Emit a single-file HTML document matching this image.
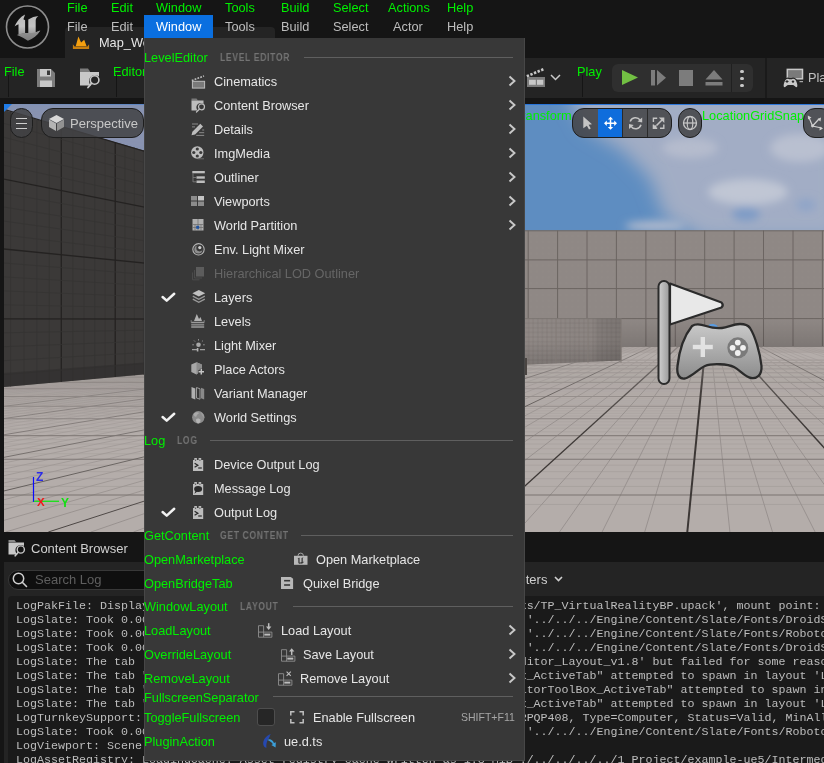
<!DOCTYPE html><html><head><meta charset="utf-8"><style>
html,body{margin:0;padding:0}
body{width:824px;height:763px;overflow:hidden;position:relative;background:#151515;font-family:"Liberation Sans",sans-serif}
.t{position:absolute;white-space:pre;line-height:15px;font-family:"Liberation Sans",sans-serif;will-change:transform}
.m{position:absolute;will-change:transform;white-space:pre;font-family:"Liberation Mono",monospace;font-size:11.667px;line-height:14px;color:#bdbdbd}
svg{overflow:visible}
</style></head><body>
<svg style="position:absolute;left:0px;top:0px;" width="56" height="56" viewBox="0 0 56 56">
<defs><linearGradient id="ug" gradientUnits="userSpaceOnUse" x1="0" y1="14" x2="0" y2="41"><stop offset="0" stop-color="#b8b8b8"/><stop offset="0.45" stop-color="#c4c4c4"/><stop offset="0.75" stop-color="#9a9a9a"/><stop offset="1" stop-color="#7a7a7a"/></linearGradient><linearGradient id="ugb" gradientUnits="userSpaceOnUse" x1="0" y1="30" x2="0" y2="41"><stop offset="0" stop-color="#959595"/><stop offset="1" stop-color="#7c7c7c"/></linearGradient></defs>
<circle cx="27.5" cy="27" r="21" fill="#121212" stroke="#8e8e8e" stroke-width="1.6"/>
<path d="M14.6 26.5 C16.5 21.5 20.5 16.5 25.1 14.4 L23.4 19.2 L25.1 20.3 L25.1 33.3 L18.5 34.5 L18.5 24.2 C17 24.6 15.8 25.5 14.6 26.5 Z" fill="url(#ug)"/><path d="M28.3 19.6 C31.5 17.5 35 16.3 38.4 16 C36.8 17.3 35.7 18.5 35.7 20.5 L35.7 32.3 C37.3 31.8 38.8 31.3 40.3 30.6 L34 37 L28.3 34 Z" fill="url(#ug)"/><path d="M16.9 35 C19.5 34 22 33.3 25.1 33 L28.3 33 C31 33.3 35 33 40.3 30.6 C37.5 35.5 33 39 27.9 40.7 C25.5 39.2 22 37 16.9 35 Z" fill="url(#ugb)"/>
</svg>
<div style="position:absolute;left:65px;top:27px;width:210px;height:31px;background:#242424;border-radius:4px 4px 0 0"></div>
<svg style="position:absolute;left:72px;top:36px;" width="18" height="14" viewBox="0 0 18 14"><path d="M3.7 10.2 L6.4 0.4 L9.1 6.4 L12.2 3.7 L14.6 10.2 Z" fill="#f5a00f"/><path d="M0.9 8.2 L2.6 10.4 H15.4 L17.1 8.2 V13 H0.9 Z" fill="#c9800f"/></svg>
<div class="t" style="left:98.50px;top:34.88px;font-size:12.75px;color:#e6e6e6;font-weight:normal;">Map_World</div>
<div class="t" style="left:67.00px;top:-0.02px;font-size:12.75px;color:#00f000;font-weight:normal;">File</div>
<div class="t" style="left:111.00px;top:-0.02px;font-size:12.75px;color:#00f000;font-weight:normal;">Edit</div>
<div class="t" style="left:155.50px;top:-0.02px;font-size:12.75px;color:#00f000;font-weight:normal;">Window</div>
<div class="t" style="left:224.50px;top:-0.02px;font-size:12.75px;color:#00f000;font-weight:normal;">Tools</div>
<div class="t" style="left:281.00px;top:-0.02px;font-size:12.75px;color:#00f000;font-weight:normal;">Build</div>
<div class="t" style="left:333.00px;top:-0.02px;font-size:12.75px;color:#00f000;font-weight:normal;">Select</div>
<div class="t" style="left:387.50px;top:-0.02px;font-size:12.75px;color:#00f000;font-weight:normal;">Actions</div>
<div class="t" style="left:447.00px;top:-0.02px;font-size:12.75px;color:#00f000;font-weight:normal;">Help</div>
<div style="position:absolute;left:144px;top:15px;width:69px;height:23px;background:#0a6fe0;"></div>
<div class="t" style="left:67.00px;top:19.08px;font-size:12.75px;color:#bdbdbd;font-weight:normal;">File</div>
<div class="t" style="left:111.00px;top:19.08px;font-size:12.75px;color:#bdbdbd;font-weight:normal;">Edit</div>
<div class="t" style="left:155.50px;top:19.08px;font-size:12.75px;color:#ffffff;font-weight:normal;">Window</div>
<div class="t" style="left:224.50px;top:19.08px;font-size:12.75px;color:#bdbdbd;font-weight:normal;">Tools</div>
<div class="t" style="left:281.00px;top:19.08px;font-size:12.75px;color:#bdbdbd;font-weight:normal;">Build</div>
<div class="t" style="left:333.00px;top:19.08px;font-size:12.75px;color:#bdbdbd;font-weight:normal;">Select</div>
<div class="t" style="left:393.00px;top:19.08px;font-size:12.75px;color:#bdbdbd;font-weight:normal;">Actor</div>
<div class="t" style="left:447.00px;top:19.08px;font-size:12.75px;color:#bdbdbd;font-weight:normal;">Help</div>
<div style="position:absolute;left:0px;top:58px;width:824px;height:40px;background:#242424;"></div>
<div class="t" style="left:4.00px;top:63.88px;font-size:12.75px;color:#00f000;font-weight:normal;">File</div>
<div style="position:absolute;left:8px;top:75px;width:1px;height:22px;background:#151515;"></div>
<svg style="position:absolute;left:36px;top:68px;" width="20" height="20" viewBox="0 0 20 20"><path d="M1 1 H15 L19 5 V19 H1 Z" fill="#7c7c7c"/><rect x="4" y="1" width="11" height="7.5" fill="#c8c8c8"/><rect x="11" y="2.5" width="3" height="4.5" fill="#3a3a3a"/><rect x="4" y="12.5" width="12" height="6.5" fill="#c8c8c8"/></svg>
<svg style="position:absolute;left:80px;top:68px;" width="22" height="22" viewBox="0 0 22 22"><path d="M0 0.5 H8 L10 3.5 H10 V4 H0 Z" fill="#7c7c7c"/><path d="M0 4 H19 V8.5 A6 6 0 0 0 11 17.5 H0 Z" fill="#c8c8c8"/><circle cx="14.6" cy="12" r="4.3" fill="none" stroke="#c8c8c8" stroke-width="1.6"/><path d="M11.6 15.2 L8 19.5" stroke="#c8c8c8" stroke-width="1.8" stroke-linecap="round"/></svg>
<div class="t" style="left:112.50px;top:63.88px;font-size:12.75px;color:#00f000;font-weight:normal;">Editor</div>
<div style="position:absolute;left:116px;top:75px;width:1px;height:22px;background:#151515;"></div>
<svg style="position:absolute;left:0px;top:0px;" width="1" height="1" viewBox="0 0 1 1"><path d="M526.8 76.3 L544 69" stroke="#c8c8c8" stroke-width="2.6" stroke-dasharray="2.4 1.5"/><rect x="527" y="77" width="18" height="10" fill="#7c7c7c"/><rect x="529" y="79.8" width="6.8" height="5" fill="#c8c8c8"/><rect x="537" y="79.8" width="6.3" height="5" fill="#c8c8c8"/></svg>
<svg style="position:absolute;left:550px;top:74px;" width="11" height="7" viewBox="0 0 11 7"><path d="M1 1 L5.5 5.5 L10 1" fill="none" stroke="#c8c8c8" stroke-width="1.5"/></svg>
<div class="t" style="left:577.00px;top:64.38px;font-size:12.75px;color:#00f000;font-weight:normal;">Play</div>
<div style="position:absolute;left:582px;top:75px;width:1px;height:22px;background:#151515;"></div>
<div style="position:absolute;left:612px;top:64px;width:141px;height:28px;background:#2f2f2f;border-radius:6px"></div>
<div style="position:absolute;left:731px;top:64px;width:1px;height:28px;background:#202020;"></div>
<svg style="position:absolute;left:621px;top:69px;" width="18" height="18" viewBox="0 0 18 18"><path d="M1 1 L17 8.5 L1 16 Z" fill="#72c043"/></svg>
<svg style="position:absolute;left:650px;top:69px;" width="18" height="18" viewBox="0 0 18 18"><rect x="1" y="1" width="4" height="15.5" fill="#7c7c7c"/><path d="M7 1 L16 8.7 L7 16.5 Z" fill="#7c7c7c"/></svg>
<div style="position:absolute;left:679px;top:70px;width:14px;height:15.5px;background:#7c7c7c;"></div>
<svg style="position:absolute;left:705px;top:69px;" width="20" height="18" viewBox="0 0 20 18"><path d="M0.5 10.5 L9 1 L17.5 10.5 Z" fill="#7c7c7c"/><rect x="0.5" y="13" width="17" height="3.5" fill="#7c7c7c"/></svg>
<div style="position:absolute;left:740px;top:69.5px;width:3.6px;height:3.6px;border-radius:50%;background:#c8c8c8"></div>
<div style="position:absolute;left:740px;top:76.7px;width:3.6px;height:3.6px;border-radius:50%;background:#c8c8c8"></div>
<div style="position:absolute;left:740px;top:83.8px;width:3.6px;height:3.6px;border-radius:50%;background:#c8c8c8"></div>
<div style="position:absolute;left:765px;top:58px;width:2px;height:40px;background:#1a1a1a;"></div>
<svg style="position:absolute;left:782px;top:68px;" width="22" height="22" viewBox="0 0 22 22"><rect x="5.3" y="1.4" width="15.2" height="9.4" fill="#7a7a7a" stroke="#c8c8c8" stroke-width="1.5"/><path d="M2.5 19.8 C0.6 19.8 0.6 16.5 2.2 13 C3.2 10.8 5.5 9.5 7.2 10.6 L9.8 10.6 C11.5 9.5 13.8 10.8 14.8 13 C16.4 16.5 16.4 19.8 14.5 19.8 C13 19.8 12 17.5 10.5 17.5 L6.5 17.5 C5 17.5 4 19.8 2.5 19.8 Z" fill="#c8c8c8" stroke="#242424" stroke-width="1.2"/><path d="M3.5 13.5 H6.5 M5 12 V15" stroke="#2a2a2a" stroke-width="1"/><circle cx="11" cy="13.6" r="1.2" fill="#2a2a2a"/><path d="M17.5 13.7 H21" stroke="#c8c8c8" stroke-width="1"/></svg>
<div class="t" style="left:808.00px;top:70.28px;font-size:12.75px;color:#c0c0c0;font-weight:normal;">Play</div>
<svg style="position:absolute;left:0;top:0" width="824" height="532" viewBox="0 0 824 532"><defs>
<clipPath id="vpc"><rect x="4" y="104" width="820" height="428"/></clipPath>
<clipPath id="floorc"><rect x="4" y="347" width="820" height="186"/></clipPath>
<linearGradient id="sky" x1="0" y1="0" x2="0" y2="1"><stop offset="0" stop-color="#5a84b9"/><stop offset="1" stop-color="#7b9cc6"/></linearGradient>
<filter id="blur8" x="-50%" y="-50%" width="200%" height="200%"><feGaussianBlur stdDeviation="9"/></filter>
<filter id="blur4" x="-50%" y="-50%" width="200%" height="200%"><feGaussianBlur stdDeviation="4"/></filter>
<pattern id="fgrid" x="0" y="0" width="5.9" height="5.9" patternUnits="userSpaceOnUse"><rect width="5.9" height="5.9" fill="none" stroke="#938b88" stroke-width="0.35"/></pattern>
<pattern id="lgrid" x="524" y="318.6" width="4.6" height="4.6" patternUnits="userSpaceOnUse"><rect width="4.6" height="4.6" fill="none" stroke="#7c7572" stroke-width="0.45"/></pattern>
<pattern id="dgrid" x="4" y="0" width="6" height="6" patternUnits="userSpaceOnUse"><rect width="6" height="6" fill="none" stroke="#2f2d2c" stroke-width="0.5"/></pattern>
<linearGradient id="padg" x1="0" y1="0" x2="0" y2="1"><stop offset="0" stop-color="#c9c9c9"/><stop offset="1" stop-color="#8c8c8c"/></linearGradient>
<linearGradient id="poleg" x1="0" y1="0" x2="1" y2="0"><stop offset="0" stop-color="#d0d0d0"/><stop offset="1" stop-color="#9a9a9a"/></linearGradient>
</defs><g clip-path="url(#vpc)"><rect x="4" y="104" width="820" height="250" fill="#5e8dc1"/><g filter="url(#blur8)"><path d="M565 90 L840 90 L840 240 L705 240 L665 218 L650 178 L622 150 L585 128 Z" fill="#a2adc5"/><path d="M-20 95 L420 95 L420 200 L-20 140 Z" fill="#8993b0"/></g><g filter="url(#blur4)"><ellipse cx="748" cy="192" rx="40" ry="13" fill="#c0c6d4"/><ellipse cx="800" cy="148" rx="30" ry="14" fill="#b9c0d0"/><ellipse cx="690" cy="148" rx="28" ry="10" fill="#b5bccd"/><ellipse cx="655" cy="226" rx="30" ry="5" fill="#b3bbcd"/><ellipse cx="746" cy="214" rx="14" ry="7" fill="#7e9bc6"/><ellipse cx="806" cy="205" rx="10" ry="6" fill="#8ea4c8"/></g><rect x="4" y="230.5" width="820" height="117" fill="#8f8885"/><rect x="4" y="230.5" width="820" height="116" fill="url(#fgrid)" opacity="0.5"/><line x1="-1.4" y1="230.5" x2="-1.4" y2="346" stroke="#6c6562" stroke-width="1"/><line x1="28.0" y1="230.5" x2="28.0" y2="346" stroke="#6c6562" stroke-width="1"/><line x1="57.5" y1="230.5" x2="57.5" y2="346" stroke="#6c6562" stroke-width="1"/><line x1="86.9" y1="230.5" x2="86.9" y2="346" stroke="#6c6562" stroke-width="1"/><line x1="116.3" y1="230.5" x2="116.3" y2="346" stroke="#6c6562" stroke-width="1"/><line x1="145.7" y1="230.5" x2="145.7" y2="346" stroke="#6c6562" stroke-width="1"/><line x1="175.1" y1="230.5" x2="175.1" y2="346" stroke="#6c6562" stroke-width="1"/><line x1="204.6" y1="230.5" x2="204.6" y2="346" stroke="#6c6562" stroke-width="1"/><line x1="234.0" y1="230.5" x2="234.0" y2="346" stroke="#6c6562" stroke-width="1"/><line x1="263.4" y1="230.5" x2="263.4" y2="346" stroke="#6c6562" stroke-width="1"/><line x1="292.8" y1="230.5" x2="292.8" y2="346" stroke="#6c6562" stroke-width="1"/><line x1="322.2" y1="230.5" x2="322.2" y2="346" stroke="#6c6562" stroke-width="1"/><line x1="351.7" y1="230.5" x2="351.7" y2="346" stroke="#6c6562" stroke-width="1"/><line x1="381.1" y1="230.5" x2="381.1" y2="346" stroke="#6c6562" stroke-width="1"/><line x1="410.5" y1="230.5" x2="410.5" y2="346" stroke="#6c6562" stroke-width="1"/><line x1="439.9" y1="230.5" x2="439.9" y2="346" stroke="#6c6562" stroke-width="1"/><line x1="469.3" y1="230.5" x2="469.3" y2="346" stroke="#6c6562" stroke-width="1"/><line x1="498.8" y1="230.5" x2="498.8" y2="346" stroke="#6c6562" stroke-width="1"/><line x1="528.2" y1="230.5" x2="528.2" y2="346" stroke="#6c6562" stroke-width="1"/><line x1="557.6" y1="230.5" x2="557.6" y2="346" stroke="#6c6562" stroke-width="1"/><line x1="587.0" y1="230.5" x2="587.0" y2="346" stroke="#6c6562" stroke-width="1"/><line x1="616.4" y1="230.5" x2="616.4" y2="346" stroke="#6c6562" stroke-width="1"/><line x1="645.9" y1="230.5" x2="645.9" y2="346" stroke="#6c6562" stroke-width="1"/><line x1="675.3" y1="230.5" x2="675.3" y2="346" stroke="#6c6562" stroke-width="1"/><line x1="704.7" y1="230.5" x2="704.7" y2="346" stroke="#6c6562" stroke-width="1"/><line x1="734.1" y1="230.5" x2="734.1" y2="346" stroke="#6c6562" stroke-width="1"/><line x1="763.5" y1="230.5" x2="763.5" y2="346" stroke="#6c6562" stroke-width="1"/><line x1="793.0" y1="230.5" x2="793.0" y2="346" stroke="#6c6562" stroke-width="1"/><line x1="822.4" y1="230.5" x2="822.4" y2="346" stroke="#6c6562" stroke-width="1"/><line x1="4" y1="230.8" x2="824" y2="230.8" stroke="#6c6562" stroke-width="1"/><line x1="4" y1="259.9" x2="824" y2="259.9" stroke="#6c6562" stroke-width="1"/><line x1="4" y1="288.6" x2="824" y2="288.6" stroke="#6c6562" stroke-width="1"/><line x1="4" y1="318.6" x2="824" y2="318.6" stroke="#6c6562" stroke-width="1"/><linearGradient id="wao" x1="0" y1="0" x2="0" y2="1"><stop offset="0" stop-color="#000" stop-opacity="0"/><stop offset="1" stop-color="#000" stop-opacity="0.13"/></linearGradient><rect x="4" y="318" width="820" height="29" fill="url(#wao)"/><linearGradient id="majg" gradientUnits="userSpaceOnUse" x1="0" y1="350" x2="0" y2="532"><stop offset="0" stop-color="#a39c99"/><stop offset="0.275" stop-color="#8e8784"/><stop offset="0.495" stop-color="#736d6a"/><stop offset="1" stop-color="#474240"/></linearGradient><linearGradient id="medg" gradientUnits="userSpaceOnUse" x1="0" y1="350" x2="0" y2="532"><stop offset="0" stop-color="#b2aba8"/><stop offset="0.3" stop-color="#a7a09d"/><stop offset="1" stop-color="#98918e"/></linearGradient><g clip-path="url(#floorc)"><rect x="4" y="345" width="820" height="190" fill="#b4adaa"/><line x1="4" y1="504.48" x2="824" y2="504.48" stroke="#a39c99" stroke-width="0.7"/><line x1="4" y1="486.46" x2="824" y2="486.46" stroke="#a49d9a" stroke-width="0.7"/><line x1="4" y1="478.71" x2="824" y2="478.71" stroke="#a59e9b" stroke-width="0.7"/><line x1="4" y1="471.65" x2="824" y2="471.65" stroke="#a59e9b" stroke-width="0.7"/><line x1="4" y1="465.18" x2="824" y2="465.18" stroke="#a69f9c" stroke-width="0.7"/><line x1="4" y1="453.77" x2="824" y2="453.77" stroke="#a7a09d" stroke-width="0.7"/><line x1="4" y1="448.72" x2="824" y2="448.72" stroke="#a8a19e" stroke-width="0.7"/><line x1="4" y1="444.02" x2="824" y2="444.02" stroke="#a8a19e" stroke-width="0.7"/><line x1="4" y1="439.66" x2="824" y2="439.66" stroke="#a8a19e" stroke-width="0.7"/><line x1="4" y1="431.80" x2="824" y2="431.80" stroke="#a9a29f" stroke-width="0.7"/><line x1="4" y1="428.24" x2="824" y2="428.24" stroke="#a9a29f" stroke-width="0.7"/><line x1="4" y1="424.90" x2="824" y2="424.90" stroke="#aaa3a0" stroke-width="0.7"/><line x1="4" y1="421.76" x2="824" y2="421.76" stroke="#aaa3a0" stroke-width="0.7"/><line x1="4" y1="416.00" x2="824" y2="416.00" stroke="#aba4a1" stroke-width="0.7"/><line x1="4" y1="413.36" x2="824" y2="413.36" stroke="#aba4a1" stroke-width="0.7"/><line x1="4" y1="410.87" x2="824" y2="410.87" stroke="#aba4a1" stroke-width="0.7"/><line x1="4" y1="408.50" x2="824" y2="408.50" stroke="#aba4a1" stroke-width="0.7"/><line x1="4" y1="404.11" x2="824" y2="404.11" stroke="#aca5a2" stroke-width="0.7"/><line x1="4" y1="402.07" x2="824" y2="402.07" stroke="#aca5a2" stroke-width="0.7"/><line x1="4" y1="400.13" x2="824" y2="400.13" stroke="#aca5a2" stroke-width="0.7"/><line x1="4" y1="398.28" x2="824" y2="398.28" stroke="#aca5a2" stroke-width="0.7"/><line x1="4" y1="394.83" x2="824" y2="394.83" stroke="#ada6a3" stroke-width="0.7"/><line x1="4" y1="393.21" x2="824" y2="393.21" stroke="#ada6a3" stroke-width="0.7"/><line x1="4" y1="391.66" x2="824" y2="391.66" stroke="#ada6a3" stroke-width="0.7"/><line x1="4" y1="390.18" x2="824" y2="390.18" stroke="#ada6a3" stroke-width="0.7"/><line x1="4" y1="387.38" x2="824" y2="387.38" stroke="#ada6a3" stroke-width="0.7"/><line x1="4" y1="386.07" x2="824" y2="386.07" stroke="#ada6a3" stroke-width="0.7"/><line x1="4" y1="384.80" x2="824" y2="384.80" stroke="#ada6a3" stroke-width="0.7"/><line x1="4" y1="383.58" x2="824" y2="383.58" stroke="#aea7a4" stroke-width="0.7"/><line x1="4" y1="381.28" x2="824" y2="381.28" stroke="#aea7a4" stroke-width="0.7"/><line x1="4" y1="380.19" x2="824" y2="380.19" stroke="#aea7a4" stroke-width="0.7"/><line x1="4" y1="379.13" x2="824" y2="379.13" stroke="#aea7a4" stroke-width="0.7"/><line x1="4" y1="378.12" x2="824" y2="378.12" stroke="#aea7a4" stroke-width="0.7"/><line x1="4" y1="376.18" x2="824" y2="376.18" stroke="#aea7a4" stroke-width="0.7"/><line x1="4" y1="375.26" x2="824" y2="375.26" stroke="#aea7a4" stroke-width="0.7"/><line x1="4" y1="374.37" x2="824" y2="374.37" stroke="#aea7a4" stroke-width="0.7"/><line x1="4" y1="373.51" x2="824" y2="373.51" stroke="#afa8a5" stroke-width="0.7"/><line x1="4" y1="371.87" x2="824" y2="371.87" stroke="#afa8a5" stroke-width="0.7"/><line x1="4" y1="371.08" x2="824" y2="371.08" stroke="#afa8a5" stroke-width="0.7"/><line x1="4" y1="370.32" x2="824" y2="370.32" stroke="#afa8a5" stroke-width="0.7"/><line x1="4" y1="369.58" x2="824" y2="369.58" stroke="#afa8a5" stroke-width="0.7"/><line x1="4" y1="368.16" x2="824" y2="368.16" stroke="#afa8a5" stroke-width="0.7"/><line x1="4" y1="367.48" x2="824" y2="367.48" stroke="#afa8a5" stroke-width="0.7"/><line x1="4" y1="366.82" x2="824" y2="366.82" stroke="#afa8a5" stroke-width="0.7"/><line x1="4" y1="366.18" x2="824" y2="366.18" stroke="#afa8a5" stroke-width="0.7"/><line x1="4" y1="364.95" x2="824" y2="364.95" stroke="#afa8a5" stroke-width="0.7"/><line x1="4" y1="364.35" x2="824" y2="364.35" stroke="#afa8a5" stroke-width="0.7"/><line x1="4" y1="363.78" x2="824" y2="363.78" stroke="#afa8a5" stroke-width="0.7"/><line x1="4" y1="363.21" x2="824" y2="363.21" stroke="#afa8a5" stroke-width="0.7"/><linearGradient id="lg1" gradientUnits="userSpaceOnUse" x1="0" y1="347" x2="0" y2="532"><stop offset="0.000" stop-color="#b0a9a6"/><stop offset="0.070" stop-color="#afa8a5"/><stop offset="0.178" stop-color="#ada6a3"/><stop offset="0.286" stop-color="#aca5a2"/><stop offset="0.449" stop-color="#aaa3a0"/><stop offset="0.611" stop-color="#a8a29f"/><stop offset="0.827" stop-color="#a7a09d"/><stop offset="1.000" stop-color="#a59e9c"/></linearGradient><line x1="708" y1="319.6" x2="-1826.1" y2="532" stroke="url(#lg1)" stroke-width="0.9"/><linearGradient id="lg2" gradientUnits="userSpaceOnUse" x1="0" y1="347" x2="0" y2="532"><stop offset="0.000" stop-color="#b0a9a6"/><stop offset="0.070" stop-color="#aea8a5"/><stop offset="0.178" stop-color="#ada6a3"/><stop offset="0.286" stop-color="#aca5a2"/><stop offset="0.449" stop-color="#aaa3a0"/><stop offset="0.611" stop-color="#a8a29f"/><stop offset="0.827" stop-color="#a6a09d"/><stop offset="1.000" stop-color="#a59e9b"/></linearGradient><line x1="708" y1="319.6" x2="-1783.5" y2="532" stroke="url(#lg2)" stroke-width="0.9"/><linearGradient id="lg3" gradientUnits="userSpaceOnUse" x1="0" y1="347" x2="0" y2="532"><stop offset="0.000" stop-color="#b0a9a6"/><stop offset="0.070" stop-color="#aea8a5"/><stop offset="0.178" stop-color="#ada6a3"/><stop offset="0.286" stop-color="#aca5a2"/><stop offset="0.449" stop-color="#aaa3a0"/><stop offset="0.611" stop-color="#a8a19f"/><stop offset="0.827" stop-color="#a6a09d"/><stop offset="1.000" stop-color="#a59e9b"/></linearGradient><line x1="708" y1="319.6" x2="-1740.9" y2="532" stroke="url(#lg3)" stroke-width="0.9"/><linearGradient id="lg4" gradientUnits="userSpaceOnUse" x1="0" y1="347" x2="0" y2="532"><stop offset="0.000" stop-color="#b0a9a6"/><stop offset="0.070" stop-color="#aea7a5"/><stop offset="0.178" stop-color="#ada6a3"/><stop offset="0.286" stop-color="#aba5a2"/><stop offset="0.449" stop-color="#aaa3a0"/><stop offset="0.611" stop-color="#a8a19e"/><stop offset="0.827" stop-color="#a69f9d"/><stop offset="1.000" stop-color="#a59e9b"/></linearGradient><line x1="708" y1="319.6" x2="-1698.3" y2="532" stroke="url(#lg4)" stroke-width="0.9"/><linearGradient id="lg5" gradientUnits="userSpaceOnUse" x1="0" y1="347" x2="0" y2="532"><stop offset="0.000" stop-color="#afa9a6"/><stop offset="0.070" stop-color="#aea7a4"/><stop offset="0.178" stop-color="#ada6a3"/><stop offset="0.286" stop-color="#aba4a2"/><stop offset="0.449" stop-color="#a9a3a0"/><stop offset="0.611" stop-color="#a8a19e"/><stop offset="0.827" stop-color="#a69f9c"/><stop offset="1.000" stop-color="#a49e9b"/></linearGradient><line x1="708" y1="319.6" x2="-1613.1" y2="532" stroke="url(#lg5)" stroke-width="0.9"/><linearGradient id="lg6" gradientUnits="userSpaceOnUse" x1="0" y1="347" x2="0" y2="532"><stop offset="0.000" stop-color="#afa8a6"/><stop offset="0.070" stop-color="#aea7a4"/><stop offset="0.178" stop-color="#ada6a3"/><stop offset="0.286" stop-color="#aba4a1"/><stop offset="0.449" stop-color="#a9a3a0"/><stop offset="0.611" stop-color="#a8a19e"/><stop offset="0.827" stop-color="#a69f9c"/><stop offset="1.000" stop-color="#a49e9b"/></linearGradient><line x1="708" y1="319.6" x2="-1570.5" y2="532" stroke="url(#lg6)" stroke-width="0.9"/><linearGradient id="lg7" gradientUnits="userSpaceOnUse" x1="0" y1="347" x2="0" y2="532"><stop offset="0.000" stop-color="#afa8a5"/><stop offset="0.070" stop-color="#aea7a4"/><stop offset="0.178" stop-color="#ada6a3"/><stop offset="0.286" stop-color="#aba4a1"/><stop offset="0.449" stop-color="#a9a2a0"/><stop offset="0.611" stop-color="#a8a19e"/><stop offset="0.827" stop-color="#a69f9c"/><stop offset="1.000" stop-color="#a49d9a"/></linearGradient><line x1="708" y1="319.6" x2="-1527.9" y2="532" stroke="url(#lg7)" stroke-width="0.9"/><linearGradient id="lg8" gradientUnits="userSpaceOnUse" x1="0" y1="347" x2="0" y2="532"><stop offset="0.000" stop-color="#afa8a5"/><stop offset="0.070" stop-color="#aea7a4"/><stop offset="0.178" stop-color="#aca6a3"/><stop offset="0.286" stop-color="#aba4a1"/><stop offset="0.449" stop-color="#a9a29f"/><stop offset="0.611" stop-color="#a7a19e"/><stop offset="0.827" stop-color="#a59f9c"/><stop offset="1.000" stop-color="#a49d9a"/></linearGradient><line x1="708" y1="319.6" x2="-1485.3" y2="532" stroke="url(#lg8)" stroke-width="0.9"/><linearGradient id="lg9" gradientUnits="userSpaceOnUse" x1="0" y1="347" x2="0" y2="532"><stop offset="0.000" stop-color="#afa8a5"/><stop offset="0.070" stop-color="#aea7a4"/><stop offset="0.178" stop-color="#aca5a2"/><stop offset="0.286" stop-color="#aba4a1"/><stop offset="0.449" stop-color="#a9a29f"/><stop offset="0.611" stop-color="#a7a09d"/><stop offset="0.827" stop-color="#a59e9b"/><stop offset="1.000" stop-color="#a49d9a"/></linearGradient><line x1="708" y1="319.6" x2="-1400.1" y2="532" stroke="url(#lg9)" stroke-width="0.9"/><linearGradient id="lg10" gradientUnits="userSpaceOnUse" x1="0" y1="347" x2="0" y2="532"><stop offset="0.000" stop-color="#afa8a5"/><stop offset="0.070" stop-color="#aea7a4"/><stop offset="0.178" stop-color="#aca5a2"/><stop offset="0.286" stop-color="#aba4a1"/><stop offset="0.449" stop-color="#a9a29f"/><stop offset="0.611" stop-color="#a7a09d"/><stop offset="0.827" stop-color="#a59e9b"/><stop offset="1.000" stop-color="#a39d9a"/></linearGradient><line x1="708" y1="319.6" x2="-1357.5" y2="532" stroke="url(#lg10)" stroke-width="0.9"/><linearGradient id="lg11" gradientUnits="userSpaceOnUse" x1="0" y1="347" x2="0" y2="532"><stop offset="0.000" stop-color="#afa8a5"/><stop offset="0.070" stop-color="#aea7a4"/><stop offset="0.178" stop-color="#aca5a2"/><stop offset="0.286" stop-color="#aba4a1"/><stop offset="0.449" stop-color="#a9a29f"/><stop offset="0.611" stop-color="#a7a09d"/><stop offset="0.827" stop-color="#a59e9b"/><stop offset="1.000" stop-color="#a39c9a"/></linearGradient><line x1="708" y1="319.6" x2="-1314.9" y2="532" stroke="url(#lg11)" stroke-width="0.9"/><linearGradient id="lg12" gradientUnits="userSpaceOnUse" x1="0" y1="347" x2="0" y2="532"><stop offset="0.000" stop-color="#afa8a5"/><stop offset="0.070" stop-color="#aea7a4"/><stop offset="0.178" stop-color="#aca5a2"/><stop offset="0.286" stop-color="#aaa4a1"/><stop offset="0.449" stop-color="#a8a29f"/><stop offset="0.611" stop-color="#a7a09d"/><stop offset="0.827" stop-color="#a59e9b"/><stop offset="1.000" stop-color="#a39c99"/></linearGradient><line x1="708" y1="319.6" x2="-1272.3" y2="532" stroke="url(#lg12)" stroke-width="0.9"/><linearGradient id="lg13" gradientUnits="userSpaceOnUse" x1="0" y1="347" x2="0" y2="532"><stop offset="0.000" stop-color="#afa8a5"/><stop offset="0.070" stop-color="#aea7a4"/><stop offset="0.178" stop-color="#aca5a2"/><stop offset="0.286" stop-color="#aaa3a0"/><stop offset="0.449" stop-color="#a8a19e"/><stop offset="0.611" stop-color="#a6a09d"/><stop offset="0.827" stop-color="#a49d9a"/><stop offset="1.000" stop-color="#a29c99"/></linearGradient><line x1="708" y1="319.6" x2="-1187.1" y2="532" stroke="url(#lg13)" stroke-width="0.9"/><linearGradient id="lg14" gradientUnits="userSpaceOnUse" x1="0" y1="347" x2="0" y2="532"><stop offset="0.000" stop-color="#afa8a5"/><stop offset="0.070" stop-color="#ada7a4"/><stop offset="0.178" stop-color="#aca5a2"/><stop offset="0.286" stop-color="#aaa3a0"/><stop offset="0.449" stop-color="#a8a19e"/><stop offset="0.611" stop-color="#a69f9c"/><stop offset="0.827" stop-color="#a49d9a"/><stop offset="1.000" stop-color="#a29c99"/></linearGradient><line x1="708" y1="319.6" x2="-1144.5" y2="532" stroke="url(#lg14)" stroke-width="0.9"/><linearGradient id="lg15" gradientUnits="userSpaceOnUse" x1="0" y1="347" x2="0" y2="532"><stop offset="0.000" stop-color="#afa8a5"/><stop offset="0.070" stop-color="#ada6a4"/><stop offset="0.178" stop-color="#aca5a2"/><stop offset="0.286" stop-color="#aaa3a0"/><stop offset="0.449" stop-color="#a8a19e"/><stop offset="0.611" stop-color="#a69f9c"/><stop offset="0.827" stop-color="#a49d9a"/><stop offset="1.000" stop-color="#a29b98"/></linearGradient><line x1="708" y1="319.6" x2="-1101.9" y2="532" stroke="url(#lg15)" stroke-width="0.9"/><linearGradient id="lg16" gradientUnits="userSpaceOnUse" x1="0" y1="347" x2="0" y2="532"><stop offset="0.000" stop-color="#afa8a5"/><stop offset="0.070" stop-color="#ada6a3"/><stop offset="0.178" stop-color="#aba5a2"/><stop offset="0.286" stop-color="#aaa3a0"/><stop offset="0.449" stop-color="#a8a19e"/><stop offset="0.611" stop-color="#a69f9c"/><stop offset="0.827" stop-color="#a39d9a"/><stop offset="1.000" stop-color="#a29b98"/></linearGradient><line x1="708" y1="319.6" x2="-1059.3" y2="532" stroke="url(#lg16)" stroke-width="0.9"/><linearGradient id="lg17" gradientUnits="userSpaceOnUse" x1="0" y1="347" x2="0" y2="532"><stop offset="0.000" stop-color="#aea8a5"/><stop offset="0.070" stop-color="#ada6a3"/><stop offset="0.178" stop-color="#aba4a1"/><stop offset="0.286" stop-color="#a9a3a0"/><stop offset="0.449" stop-color="#a7a09e"/><stop offset="0.611" stop-color="#a59f9c"/><stop offset="0.827" stop-color="#a39c99"/><stop offset="1.000" stop-color="#a19a98"/></linearGradient><line x1="708" y1="319.6" x2="-974.1" y2="532" stroke="url(#lg17)" stroke-width="0.9"/><linearGradient id="lg18" gradientUnits="userSpaceOnUse" x1="0" y1="347" x2="0" y2="532"><stop offset="0.000" stop-color="#aea7a5"/><stop offset="0.070" stop-color="#ada6a3"/><stop offset="0.178" stop-color="#aba4a1"/><stop offset="0.286" stop-color="#a9a3a0"/><stop offset="0.449" stop-color="#a7a09d"/><stop offset="0.611" stop-color="#a59e9b"/><stop offset="0.827" stop-color="#a39c99"/><stop offset="1.000" stop-color="#a19a97"/></linearGradient><line x1="708" y1="319.6" x2="-931.5" y2="532" stroke="url(#lg18)" stroke-width="0.9"/><linearGradient id="lg19" gradientUnits="userSpaceOnUse" x1="0" y1="347" x2="0" y2="532"><stop offset="0.000" stop-color="#aea7a4"/><stop offset="0.070" stop-color="#ada6a3"/><stop offset="0.178" stop-color="#aba4a1"/><stop offset="0.286" stop-color="#a9a29f"/><stop offset="0.449" stop-color="#a7a09d"/><stop offset="0.611" stop-color="#a59e9b"/><stop offset="0.827" stop-color="#a29c99"/><stop offset="1.000" stop-color="#a19a97"/></linearGradient><line x1="708" y1="319.6" x2="-888.9" y2="532" stroke="url(#lg19)" stroke-width="0.9"/><linearGradient id="lg20" gradientUnits="userSpaceOnUse" x1="0" y1="347" x2="0" y2="532"><stop offset="0.000" stop-color="#aea7a4"/><stop offset="0.070" stop-color="#ada6a3"/><stop offset="0.178" stop-color="#aba4a1"/><stop offset="0.286" stop-color="#a9a29f"/><stop offset="0.449" stop-color="#a7a09d"/><stop offset="0.611" stop-color="#a59e9b"/><stop offset="0.827" stop-color="#a29b99"/><stop offset="1.000" stop-color="#a09a97"/></linearGradient><line x1="708" y1="319.6" x2="-846.3" y2="532" stroke="url(#lg20)" stroke-width="0.9"/><linearGradient id="lg21" gradientUnits="userSpaceOnUse" x1="0" y1="347" x2="0" y2="532"><stop offset="0.000" stop-color="#aea7a4"/><stop offset="0.070" stop-color="#aca6a3"/><stop offset="0.178" stop-color="#aaa4a1"/><stop offset="0.286" stop-color="#a9a29f"/><stop offset="0.449" stop-color="#a69f9d"/><stop offset="0.611" stop-color="#a49d9a"/><stop offset="0.827" stop-color="#a29b98"/><stop offset="1.000" stop-color="#a09996"/></linearGradient><line x1="708" y1="319.6" x2="-761.1" y2="532" stroke="url(#lg21)" stroke-width="0.9"/><linearGradient id="lg22" gradientUnits="userSpaceOnUse" x1="0" y1="347" x2="0" y2="532"><stop offset="0.000" stop-color="#aea7a4"/><stop offset="0.070" stop-color="#aca5a3"/><stop offset="0.178" stop-color="#aaa3a0"/><stop offset="0.286" stop-color="#a8a29f"/><stop offset="0.449" stop-color="#a69f9c"/><stop offset="0.611" stop-color="#a49d9a"/><stop offset="0.827" stop-color="#a19b98"/><stop offset="1.000" stop-color="#9f9996"/></linearGradient><line x1="708" y1="319.6" x2="-718.5" y2="532" stroke="url(#lg22)" stroke-width="0.9"/><linearGradient id="lg23" gradientUnits="userSpaceOnUse" x1="0" y1="347" x2="0" y2="532"><stop offset="0.000" stop-color="#aea7a4"/><stop offset="0.070" stop-color="#aca5a2"/><stop offset="0.178" stop-color="#aaa3a0"/><stop offset="0.286" stop-color="#a8a19f"/><stop offset="0.449" stop-color="#a69f9c"/><stop offset="0.611" stop-color="#a49d9a"/><stop offset="0.827" stop-color="#a19a97"/><stop offset="1.000" stop-color="#9f9895"/></linearGradient><line x1="708" y1="319.6" x2="-675.9" y2="532" stroke="url(#lg23)" stroke-width="0.9"/><linearGradient id="lg24" gradientUnits="userSpaceOnUse" x1="0" y1="347" x2="0" y2="532"><stop offset="0.000" stop-color="#aea7a4"/><stop offset="0.070" stop-color="#aca5a2"/><stop offset="0.178" stop-color="#aaa3a0"/><stop offset="0.286" stop-color="#a8a19e"/><stop offset="0.449" stop-color="#a59f9c"/><stop offset="0.611" stop-color="#a39d9a"/><stop offset="0.827" stop-color="#a09a97"/><stop offset="1.000" stop-color="#9e9895"/></linearGradient><line x1="708" y1="319.6" x2="-633.3" y2="532" stroke="url(#lg24)" stroke-width="0.9"/><linearGradient id="lg25" gradientUnits="userSpaceOnUse" x1="0" y1="347" x2="0" y2="532"><stop offset="0.000" stop-color="#ada7a4"/><stop offset="0.070" stop-color="#aca5a2"/><stop offset="0.178" stop-color="#a9a3a0"/><stop offset="0.286" stop-color="#a8a19e"/><stop offset="0.449" stop-color="#a59e9b"/><stop offset="0.611" stop-color="#a39c99"/><stop offset="0.827" stop-color="#a09996"/><stop offset="1.000" stop-color="#9e9794"/></linearGradient><line x1="708" y1="319.6" x2="-548.1" y2="532" stroke="url(#lg25)" stroke-width="0.9"/><linearGradient id="lg26" gradientUnits="userSpaceOnUse" x1="0" y1="347" x2="0" y2="532"><stop offset="0.000" stop-color="#ada6a3"/><stop offset="0.070" stop-color="#aca5a2"/><stop offset="0.178" stop-color="#a9a2a0"/><stop offset="0.286" stop-color="#a7a09e"/><stop offset="0.449" stop-color="#a59e9b"/><stop offset="0.611" stop-color="#a29c99"/><stop offset="0.827" stop-color="#9f9996"/><stop offset="1.000" stop-color="#9d9794"/></linearGradient><line x1="708" y1="319.6" x2="-505.5" y2="532" stroke="url(#lg26)" stroke-width="0.9"/><linearGradient id="lg27" gradientUnits="userSpaceOnUse" x1="0" y1="347" x2="0" y2="532"><stop offset="0.000" stop-color="#ada6a3"/><stop offset="0.070" stop-color="#aba5a2"/><stop offset="0.178" stop-color="#a9a29f"/><stop offset="0.286" stop-color="#a7a09d"/><stop offset="0.449" stop-color="#a49e9b"/><stop offset="0.611" stop-color="#a29b98"/><stop offset="0.827" stop-color="#9f9895"/><stop offset="1.000" stop-color="#9d9693"/></linearGradient><line x1="708" y1="319.6" x2="-462.9" y2="532" stroke="url(#lg27)" stroke-width="0.9"/><linearGradient id="lg28" gradientUnits="userSpaceOnUse" x1="0" y1="347" x2="0" y2="532"><stop offset="0.000" stop-color="#ada6a3"/><stop offset="0.070" stop-color="#aba4a1"/><stop offset="0.178" stop-color="#a9a29f"/><stop offset="0.286" stop-color="#a7a09d"/><stop offset="0.449" stop-color="#a49d9a"/><stop offset="0.611" stop-color="#a19b98"/><stop offset="0.827" stop-color="#9e9895"/><stop offset="1.000" stop-color="#9c9693"/></linearGradient><line x1="708" y1="319.6" x2="-420.3" y2="532" stroke="url(#lg28)" stroke-width="0.9"/><linearGradient id="lg29" gradientUnits="userSpaceOnUse" x1="0" y1="347" x2="0" y2="532"><stop offset="0.000" stop-color="#ada6a3"/><stop offset="0.070" stop-color="#aba4a1"/><stop offset="0.178" stop-color="#a8a19f"/><stop offset="0.286" stop-color="#a69f9c"/><stop offset="0.449" stop-color="#a39c9a"/><stop offset="0.611" stop-color="#a19a97"/><stop offset="0.827" stop-color="#9d9794"/><stop offset="1.000" stop-color="#9b9592"/></linearGradient><line x1="708" y1="319.6" x2="-335.1" y2="532" stroke="url(#lg29)" stroke-width="0.9"/><linearGradient id="lg30" gradientUnits="userSpaceOnUse" x1="0" y1="347" x2="0" y2="532"><stop offset="0.000" stop-color="#ada6a3"/><stop offset="0.070" stop-color="#aba4a1"/><stop offset="0.178" stop-color="#a8a19e"/><stop offset="0.286" stop-color="#a69f9c"/><stop offset="0.449" stop-color="#a39c99"/><stop offset="0.611" stop-color="#a09997"/><stop offset="0.827" stop-color="#9d9693"/><stop offset="1.000" stop-color="#9b9491"/></linearGradient><line x1="708" y1="319.6" x2="-292.5" y2="532" stroke="url(#lg30)" stroke-width="0.9"/><linearGradient id="lg31" gradientUnits="userSpaceOnUse" x1="0" y1="347" x2="0" y2="532"><stop offset="0.000" stop-color="#aca5a3"/><stop offset="0.070" stop-color="#aaa4a1"/><stop offset="0.178" stop-color="#a8a19e"/><stop offset="0.286" stop-color="#a59f9c"/><stop offset="0.449" stop-color="#a29c99"/><stop offset="0.611" stop-color="#a09996"/><stop offset="0.827" stop-color="#9c9693"/><stop offset="1.000" stop-color="#9a9391"/></linearGradient><line x1="708" y1="319.6" x2="-249.9" y2="532" stroke="url(#lg31)" stroke-width="0.9"/><linearGradient id="lg32" gradientUnits="userSpaceOnUse" x1="0" y1="347" x2="0" y2="532"><stop offset="0.000" stop-color="#aca5a2"/><stop offset="0.070" stop-color="#aaa3a0"/><stop offset="0.178" stop-color="#a7a19e"/><stop offset="0.286" stop-color="#a59e9b"/><stop offset="0.449" stop-color="#a29b98"/><stop offset="0.611" stop-color="#9f9896"/><stop offset="0.827" stop-color="#9c9592"/><stop offset="1.000" stop-color="#999390"/></linearGradient><line x1="708" y1="319.6" x2="-207.3" y2="532" stroke="url(#lg32)" stroke-width="0.9"/><linearGradient id="lg33" gradientUnits="userSpaceOnUse" x1="0" y1="347" x2="0" y2="532"><stop offset="0.000" stop-color="#aca5a2"/><stop offset="0.070" stop-color="#aaa3a0"/><stop offset="0.178" stop-color="#a7a09d"/><stop offset="0.286" stop-color="#a49d9b"/><stop offset="0.449" stop-color="#a19a97"/><stop offset="0.611" stop-color="#9e9794"/><stop offset="0.827" stop-color="#9a9491"/><stop offset="1.000" stop-color="#98918e"/></linearGradient><line x1="708" y1="319.6" x2="-122.1" y2="532" stroke="url(#lg33)" stroke-width="0.9"/><linearGradient id="lg34" gradientUnits="userSpaceOnUse" x1="0" y1="347" x2="0" y2="532"><stop offset="0.000" stop-color="#aba5a2"/><stop offset="0.070" stop-color="#a9a29f"/><stop offset="0.178" stop-color="#a69f9d"/><stop offset="0.286" stop-color="#a49d9a"/><stop offset="0.449" stop-color="#a09a97"/><stop offset="0.611" stop-color="#9d9794"/><stop offset="0.827" stop-color="#9a9390"/><stop offset="1.000" stop-color="#97908e"/></linearGradient><line x1="708" y1="319.6" x2="-79.5" y2="532" stroke="url(#lg34)" stroke-width="0.9"/><linearGradient id="lg35" gradientUnits="userSpaceOnUse" x1="0" y1="347" x2="0" y2="532"><stop offset="0.000" stop-color="#aba4a1"/><stop offset="0.070" stop-color="#a9a29f"/><stop offset="0.178" stop-color="#a69f9c"/><stop offset="0.286" stop-color="#a39c9a"/><stop offset="0.449" stop-color="#a09996"/><stop offset="0.611" stop-color="#9c9693"/><stop offset="0.827" stop-color="#99928f"/><stop offset="1.000" stop-color="#968f8d"/></linearGradient><line x1="708" y1="319.6" x2="-36.9" y2="532" stroke="url(#lg35)" stroke-width="0.9"/><linearGradient id="lg36" gradientUnits="userSpaceOnUse" x1="0" y1="347" x2="0" y2="532"><stop offset="0.000" stop-color="#aba4a1"/><stop offset="0.070" stop-color="#a9a29f"/><stop offset="0.178" stop-color="#a59f9c"/><stop offset="0.286" stop-color="#a39c99"/><stop offset="0.449" stop-color="#9f9896"/><stop offset="0.611" stop-color="#9c9592"/><stop offset="0.827" stop-color="#98918e"/><stop offset="1.000" stop-color="#958e8c"/></linearGradient><line x1="708" y1="319.6" x2="5.7" y2="532" stroke="url(#lg36)" stroke-width="0.9"/><linearGradient id="lg37" gradientUnits="userSpaceOnUse" x1="0" y1="347" x2="0" y2="532"><stop offset="0.000" stop-color="#aaa3a0"/><stop offset="0.070" stop-color="#a8a19e"/><stop offset="0.178" stop-color="#a49e9b"/><stop offset="0.286" stop-color="#a19b98"/><stop offset="0.449" stop-color="#9d9794"/><stop offset="0.611" stop-color="#9a9391"/><stop offset="0.827" stop-color="#968f8c"/><stop offset="1.000" stop-color="#958e8c"/></linearGradient><line x1="708" y1="319.6" x2="90.9" y2="532" stroke="url(#lg37)" stroke-width="0.9"/><linearGradient id="lg38" gradientUnits="userSpaceOnUse" x1="0" y1="347" x2="0" y2="532"><stop offset="0.000" stop-color="#aaa3a0"/><stop offset="0.070" stop-color="#a7a09e"/><stop offset="0.178" stop-color="#a49d9a"/><stop offset="0.286" stop-color="#a19a97"/><stop offset="0.449" stop-color="#9d9693"/><stop offset="0.611" stop-color="#999290"/><stop offset="0.827" stop-color="#958e8c"/><stop offset="1.000" stop-color="#958e8c"/></linearGradient><line x1="708" y1="319.6" x2="133.5" y2="532" stroke="url(#lg38)" stroke-width="0.9"/><linearGradient id="lg39" gradientUnits="userSpaceOnUse" x1="0" y1="347" x2="0" y2="532"><stop offset="0.000" stop-color="#a9a3a0"/><stop offset="0.070" stop-color="#a7a09d"/><stop offset="0.178" stop-color="#a39c99"/><stop offset="0.286" stop-color="#a09996"/><stop offset="0.449" stop-color="#9c9592"/><stop offset="0.611" stop-color="#98918f"/><stop offset="0.827" stop-color="#958e8c"/><stop offset="1.000" stop-color="#958e8c"/></linearGradient><line x1="708" y1="319.6" x2="176.1" y2="532" stroke="url(#lg39)" stroke-width="0.9"/><linearGradient id="lg40" gradientUnits="userSpaceOnUse" x1="0" y1="347" x2="0" y2="532"><stop offset="0.000" stop-color="#a9a29f"/><stop offset="0.070" stop-color="#a69f9c"/><stop offset="0.178" stop-color="#a29c99"/><stop offset="0.286" stop-color="#9f9895"/><stop offset="0.449" stop-color="#9b9491"/><stop offset="0.611" stop-color="#97908d"/><stop offset="0.827" stop-color="#958e8c"/><stop offset="1.000" stop-color="#958e8c"/></linearGradient><line x1="708" y1="319.6" x2="218.7" y2="532" stroke="url(#lg40)" stroke-width="0.9"/><linearGradient id="lg41" gradientUnits="userSpaceOnUse" x1="0" y1="347" x2="0" y2="532"><stop offset="0.000" stop-color="#a8a19e"/><stop offset="0.070" stop-color="#a59e9b"/><stop offset="0.178" stop-color="#a19a97"/><stop offset="0.286" stop-color="#9d9693"/><stop offset="0.449" stop-color="#98928f"/><stop offset="0.611" stop-color="#958e8c"/><stop offset="0.827" stop-color="#958e8c"/><stop offset="1.000" stop-color="#958e8c"/></linearGradient><line x1="708" y1="319.6" x2="303.9" y2="532" stroke="url(#lg41)" stroke-width="0.9"/><linearGradient id="lg42" gradientUnits="userSpaceOnUse" x1="0" y1="347" x2="0" y2="532"><stop offset="0.000" stop-color="#a7a09e"/><stop offset="0.070" stop-color="#a49d9a"/><stop offset="0.178" stop-color="#a09996"/><stop offset="0.286" stop-color="#9c9592"/><stop offset="0.449" stop-color="#97908d"/><stop offset="0.611" stop-color="#958e8c"/><stop offset="0.827" stop-color="#958e8c"/><stop offset="1.000" stop-color="#958e8c"/></linearGradient><line x1="708" y1="319.6" x2="346.5" y2="532" stroke="url(#lg42)" stroke-width="0.9"/><linearGradient id="lg43" gradientUnits="userSpaceOnUse" x1="0" y1="347" x2="0" y2="532"><stop offset="0.000" stop-color="#a7a09d"/><stop offset="0.070" stop-color="#a39c99"/><stop offset="0.178" stop-color="#9e9895"/><stop offset="0.286" stop-color="#9a9491"/><stop offset="0.449" stop-color="#958e8c"/><stop offset="0.611" stop-color="#958e8c"/><stop offset="0.827" stop-color="#958e8c"/><stop offset="1.000" stop-color="#958e8c"/></linearGradient><line x1="708" y1="319.6" x2="389.1" y2="532" stroke="url(#lg43)" stroke-width="0.9"/><linearGradient id="lg44" gradientUnits="userSpaceOnUse" x1="0" y1="347" x2="0" y2="532"><stop offset="0.000" stop-color="#a69f9c"/><stop offset="0.070" stop-color="#a29b98"/><stop offset="0.178" stop-color="#9d9794"/><stop offset="0.286" stop-color="#999290"/><stop offset="0.449" stop-color="#958e8c"/><stop offset="0.611" stop-color="#958e8c"/><stop offset="0.827" stop-color="#958e8c"/><stop offset="1.000" stop-color="#958e8c"/></linearGradient><line x1="708" y1="319.6" x2="431.7" y2="532" stroke="url(#lg44)" stroke-width="0.9"/><linearGradient id="lg45" gradientUnits="userSpaceOnUse" x1="0" y1="347" x2="0" y2="532"><stop offset="0.000" stop-color="#a49d9a"/><stop offset="0.070" stop-color="#a09996"/><stop offset="0.178" stop-color="#9a9491"/><stop offset="0.286" stop-color="#958f8c"/><stop offset="0.449" stop-color="#958e8c"/><stop offset="0.611" stop-color="#958e8c"/><stop offset="0.827" stop-color="#958e8c"/><stop offset="1.000" stop-color="#958e8c"/></linearGradient><line x1="708" y1="319.6" x2="516.9" y2="532" stroke="url(#lg45)" stroke-width="0.9"/><linearGradient id="lg46" gradientUnits="userSpaceOnUse" x1="0" y1="347" x2="0" y2="532"><stop offset="0.000" stop-color="#a39c99"/><stop offset="0.070" stop-color="#9f9895"/><stop offset="0.178" stop-color="#99928f"/><stop offset="0.286" stop-color="#958e8c"/><stop offset="0.449" stop-color="#958e8c"/><stop offset="0.611" stop-color="#958e8c"/><stop offset="0.827" stop-color="#958e8c"/><stop offset="1.000" stop-color="#958e8c"/></linearGradient><line x1="708" y1="319.6" x2="559.5" y2="532" stroke="url(#lg46)" stroke-width="0.9"/><linearGradient id="lg47" gradientUnits="userSpaceOnUse" x1="0" y1="347" x2="0" y2="532"><stop offset="0.000" stop-color="#a29b99"/><stop offset="0.070" stop-color="#9d9794"/><stop offset="0.178" stop-color="#97918e"/><stop offset="0.286" stop-color="#958e8c"/><stop offset="0.449" stop-color="#958e8c"/><stop offset="0.611" stop-color="#958e8c"/><stop offset="0.827" stop-color="#958e8c"/><stop offset="1.000" stop-color="#958e8c"/></linearGradient><line x1="708" y1="319.6" x2="602.1" y2="532" stroke="url(#lg47)" stroke-width="0.9"/><linearGradient id="lg48" gradientUnits="userSpaceOnUse" x1="0" y1="347" x2="0" y2="532"><stop offset="0.000" stop-color="#a19b98"/><stop offset="0.070" stop-color="#9c9693"/><stop offset="0.178" stop-color="#968f8d"/><stop offset="0.286" stop-color="#958e8c"/><stop offset="0.449" stop-color="#958e8c"/><stop offset="0.611" stop-color="#958e8c"/><stop offset="0.827" stop-color="#958e8c"/><stop offset="1.000" stop-color="#958e8c"/></linearGradient><line x1="708" y1="319.6" x2="644.7" y2="532" stroke="url(#lg48)" stroke-width="0.9"/><linearGradient id="lg49" gradientUnits="userSpaceOnUse" x1="0" y1="347" x2="0" y2="532"><stop offset="0.000" stop-color="#a19a97"/><stop offset="0.070" stop-color="#9c9592"/><stop offset="0.178" stop-color="#958f8c"/><stop offset="0.286" stop-color="#958e8c"/><stop offset="0.449" stop-color="#958e8c"/><stop offset="0.611" stop-color="#958e8c"/><stop offset="0.827" stop-color="#958e8c"/><stop offset="1.000" stop-color="#958e8c"/></linearGradient><line x1="708" y1="319.6" x2="729.9" y2="532" stroke="url(#lg49)" stroke-width="0.9"/><linearGradient id="lg50" gradientUnits="userSpaceOnUse" x1="0" y1="347" x2="0" y2="532"><stop offset="0.000" stop-color="#a19b98"/><stop offset="0.070" stop-color="#9c9693"/><stop offset="0.178" stop-color="#96908d"/><stop offset="0.286" stop-color="#958e8c"/><stop offset="0.449" stop-color="#958e8c"/><stop offset="0.611" stop-color="#958e8c"/><stop offset="0.827" stop-color="#958e8c"/><stop offset="1.000" stop-color="#958e8c"/></linearGradient><line x1="708" y1="319.6" x2="772.5" y2="532" stroke="url(#lg50)" stroke-width="0.9"/><linearGradient id="lg51" gradientUnits="userSpaceOnUse" x1="0" y1="347" x2="0" y2="532"><stop offset="0.000" stop-color="#a29b99"/><stop offset="0.070" stop-color="#9d9794"/><stop offset="0.178" stop-color="#97918e"/><stop offset="0.286" stop-color="#958e8c"/><stop offset="0.449" stop-color="#958e8c"/><stop offset="0.611" stop-color="#958e8c"/><stop offset="0.827" stop-color="#958e8c"/><stop offset="1.000" stop-color="#958e8c"/></linearGradient><line x1="708" y1="319.6" x2="815.1" y2="532" stroke="url(#lg51)" stroke-width="0.9"/><linearGradient id="lg52" gradientUnits="userSpaceOnUse" x1="0" y1="347" x2="0" y2="532"><stop offset="0.000" stop-color="#a39c99"/><stop offset="0.070" stop-color="#9f9895"/><stop offset="0.178" stop-color="#99928f"/><stop offset="0.286" stop-color="#958e8c"/><stop offset="0.449" stop-color="#958e8c"/><stop offset="0.611" stop-color="#958e8c"/><stop offset="0.827" stop-color="#958e8c"/><stop offset="1.000" stop-color="#958e8c"/></linearGradient><line x1="708" y1="319.6" x2="857.7" y2="532" stroke="url(#lg52)" stroke-width="0.9"/><linearGradient id="lg53" gradientUnits="userSpaceOnUse" x1="0" y1="347" x2="0" y2="532"><stop offset="0.000" stop-color="#a59e9b"/><stop offset="0.070" stop-color="#a19a97"/><stop offset="0.178" stop-color="#9c9592"/><stop offset="0.286" stop-color="#97918e"/><stop offset="0.449" stop-color="#958e8c"/><stop offset="0.611" stop-color="#958e8c"/><stop offset="0.827" stop-color="#958e8c"/><stop offset="1.000" stop-color="#958e8c"/></linearGradient><line x1="708" y1="319.6" x2="942.9" y2="532" stroke="url(#lg53)" stroke-width="0.9"/><linearGradient id="lg54" gradientUnits="userSpaceOnUse" x1="0" y1="347" x2="0" y2="532"><stop offset="0.000" stop-color="#a69f9c"/><stop offset="0.070" stop-color="#a29b99"/><stop offset="0.178" stop-color="#9d9794"/><stop offset="0.286" stop-color="#999290"/><stop offset="0.449" stop-color="#958e8c"/><stop offset="0.611" stop-color="#958e8c"/><stop offset="0.827" stop-color="#958e8c"/><stop offset="1.000" stop-color="#958e8c"/></linearGradient><line x1="708" y1="319.6" x2="985.5" y2="532" stroke="url(#lg54)" stroke-width="0.9"/><linearGradient id="lg55" gradientUnits="userSpaceOnUse" x1="0" y1="347" x2="0" y2="532"><stop offset="0.000" stop-color="#a7a09d"/><stop offset="0.070" stop-color="#a39c99"/><stop offset="0.178" stop-color="#9e9895"/><stop offset="0.286" stop-color="#9a9491"/><stop offset="0.449" stop-color="#958f8c"/><stop offset="0.611" stop-color="#958e8c"/><stop offset="0.827" stop-color="#958e8c"/><stop offset="1.000" stop-color="#958e8c"/></linearGradient><line x1="708" y1="319.6" x2="1028.1" y2="532" stroke="url(#lg55)" stroke-width="0.9"/><linearGradient id="lg56" gradientUnits="userSpaceOnUse" x1="0" y1="347" x2="0" y2="532"><stop offset="0.000" stop-color="#a7a09e"/><stop offset="0.070" stop-color="#a49d9a"/><stop offset="0.178" stop-color="#a09996"/><stop offset="0.286" stop-color="#9c9592"/><stop offset="0.449" stop-color="#97908d"/><stop offset="0.611" stop-color="#958e8c"/><stop offset="0.827" stop-color="#958e8c"/><stop offset="1.000" stop-color="#958e8c"/></linearGradient><line x1="708" y1="319.6" x2="1070.7" y2="532" stroke="url(#lg56)" stroke-width="0.9"/><linearGradient id="lg57" gradientUnits="userSpaceOnUse" x1="0" y1="347" x2="0" y2="532"><stop offset="0.000" stop-color="#a8a29f"/><stop offset="0.070" stop-color="#a59f9c"/><stop offset="0.178" stop-color="#a19b98"/><stop offset="0.286" stop-color="#9e9795"/><stop offset="0.449" stop-color="#999390"/><stop offset="0.611" stop-color="#958f8c"/><stop offset="0.827" stop-color="#958e8c"/><stop offset="1.000" stop-color="#958e8c"/></linearGradient><line x1="708" y1="319.6" x2="1155.9" y2="532" stroke="url(#lg57)" stroke-width="0.9"/><linearGradient id="lg58" gradientUnits="userSpaceOnUse" x1="0" y1="347" x2="0" y2="532"><stop offset="0.000" stop-color="#a9a29f"/><stop offset="0.070" stop-color="#a69f9c"/><stop offset="0.178" stop-color="#a29c99"/><stop offset="0.286" stop-color="#9f9896"/><stop offset="0.449" stop-color="#9b9491"/><stop offset="0.611" stop-color="#97908d"/><stop offset="0.827" stop-color="#958e8c"/><stop offset="1.000" stop-color="#958e8c"/></linearGradient><line x1="708" y1="319.6" x2="1198.5" y2="532" stroke="url(#lg58)" stroke-width="0.9"/><linearGradient id="lg59" gradientUnits="userSpaceOnUse" x1="0" y1="347" x2="0" y2="532"><stop offset="0.000" stop-color="#a9a3a0"/><stop offset="0.070" stop-color="#a7a09d"/><stop offset="0.178" stop-color="#a39c99"/><stop offset="0.286" stop-color="#a09996"/><stop offset="0.449" stop-color="#9c9592"/><stop offset="0.611" stop-color="#98918f"/><stop offset="0.827" stop-color="#958e8c"/><stop offset="1.000" stop-color="#958e8c"/></linearGradient><line x1="708" y1="319.6" x2="1241.1" y2="532" stroke="url(#lg59)" stroke-width="0.9"/><linearGradient id="lg60" gradientUnits="userSpaceOnUse" x1="0" y1="347" x2="0" y2="532"><stop offset="0.000" stop-color="#aaa3a0"/><stop offset="0.070" stop-color="#a7a09e"/><stop offset="0.178" stop-color="#a49d9a"/><stop offset="0.286" stop-color="#a19a97"/><stop offset="0.449" stop-color="#9d9693"/><stop offset="0.611" stop-color="#999290"/><stop offset="0.827" stop-color="#958e8c"/><stop offset="1.000" stop-color="#958e8c"/></linearGradient><line x1="708" y1="319.6" x2="1283.7" y2="532" stroke="url(#lg60)" stroke-width="0.9"/><linearGradient id="lg61" gradientUnits="userSpaceOnUse" x1="0" y1="347" x2="0" y2="532"><stop offset="0.000" stop-color="#aba4a1"/><stop offset="0.070" stop-color="#a8a19e"/><stop offset="0.178" stop-color="#a59e9b"/><stop offset="0.286" stop-color="#a29b98"/><stop offset="0.449" stop-color="#9e9895"/><stop offset="0.611" stop-color="#9b9492"/><stop offset="0.827" stop-color="#97908e"/><stop offset="1.000" stop-color="#958e8c"/></linearGradient><line x1="708" y1="319.6" x2="1368.9" y2="532" stroke="url(#lg61)" stroke-width="0.9"/><linearGradient id="lg62" gradientUnits="userSpaceOnUse" x1="0" y1="347" x2="0" y2="532"><stop offset="0.000" stop-color="#aba4a1"/><stop offset="0.070" stop-color="#a9a29f"/><stop offset="0.178" stop-color="#a59f9c"/><stop offset="0.286" stop-color="#a39c99"/><stop offset="0.449" stop-color="#9f9896"/><stop offset="0.611" stop-color="#9c9592"/><stop offset="0.827" stop-color="#98918f"/><stop offset="1.000" stop-color="#958e8c"/></linearGradient><line x1="708" y1="319.6" x2="1411.5" y2="532" stroke="url(#lg62)" stroke-width="0.9"/><linearGradient id="lg63" gradientUnits="userSpaceOnUse" x1="0" y1="347" x2="0" y2="532"><stop offset="0.000" stop-color="#aba4a1"/><stop offset="0.070" stop-color="#a9a29f"/><stop offset="0.178" stop-color="#a69f9c"/><stop offset="0.286" stop-color="#a39c9a"/><stop offset="0.449" stop-color="#a09996"/><stop offset="0.611" stop-color="#9d9693"/><stop offset="0.827" stop-color="#99928f"/><stop offset="1.000" stop-color="#968f8d"/></linearGradient><line x1="708" y1="319.6" x2="1454.1" y2="532" stroke="url(#lg63)" stroke-width="0.9"/><linearGradient id="lg64" gradientUnits="userSpaceOnUse" x1="0" y1="347" x2="0" y2="532"><stop offset="0.000" stop-color="#aba5a2"/><stop offset="0.070" stop-color="#a9a29f"/><stop offset="0.178" stop-color="#a6a09d"/><stop offset="0.286" stop-color="#a49d9a"/><stop offset="0.449" stop-color="#a09a97"/><stop offset="0.611" stop-color="#9d9794"/><stop offset="0.827" stop-color="#9a9390"/><stop offset="1.000" stop-color="#97908e"/></linearGradient><line x1="708" y1="319.6" x2="1496.7" y2="532" stroke="url(#lg64)" stroke-width="0.9"/><line x1="4" y1="495.01" x2="824" y2="495.01" stroke="#7b7471" stroke-width="1.1"/><line x1="4" y1="459.25" x2="824" y2="459.25" stroke="#7e7774" stroke-width="1.1"/><line x1="4" y1="435.60" x2="824" y2="435.60" stroke="#87807d" stroke-width="1.1"/><line x1="4" y1="418.80" x2="824" y2="418.80" stroke="#8d8683" stroke-width="1.1"/><line x1="4" y1="406.25" x2="824" y2="406.25" stroke="#928b88" stroke-width="1.1"/><line x1="4" y1="396.52" x2="824" y2="396.52" stroke="#958e8b" stroke-width="1.1"/><line x1="4" y1="388.75" x2="824" y2="388.75" stroke="#98918e" stroke-width="1.1"/><line x1="4" y1="382.41" x2="824" y2="382.41" stroke="#9b9491" stroke-width="1.1"/><line x1="4" y1="377.13" x2="824" y2="377.13" stroke="#9d9693" stroke-width="1.1"/><line x1="4" y1="372.68" x2="824" y2="372.68" stroke="#9e9794" stroke-width="1.1"/><line x1="4" y1="368.86" x2="824" y2="368.86" stroke="#a09996" stroke-width="1.1"/><line x1="4" y1="365.55" x2="824" y2="365.55" stroke="#a19a97" stroke-width="1.1"/><line x1="4" y1="362.66" x2="824" y2="362.66" stroke="#a29b98" stroke-width="1.1"/><line x1="4" y1="360.12" x2="824" y2="360.12" stroke="#a39c99" stroke-width="1.1"/><linearGradient id="lg65" gradientUnits="userSpaceOnUse" x1="0" y1="347" x2="0" y2="532"><stop offset="0.000" stop-color="#8c8583"/><stop offset="0.070" stop-color="#817b78"/><stop offset="0.178" stop-color="#736d6b"/><stop offset="0.286" stop-color="#67615f"/><stop offset="0.449" stop-color="#57524f"/><stop offset="0.611" stop-color="#494341"/><stop offset="0.827" stop-color="#3c3735"/><stop offset="1.000" stop-color="#3c3735"/></linearGradient><line x1="708" y1="319.6" x2="1113.3" y2="532" stroke="url(#lg65)" stroke-width="1.00"/><linearGradient id="lg66" gradientUnits="userSpaceOnUse" x1="0" y1="347" x2="0" y2="532"><stop offset="0.000" stop-color="#7f7976"/><stop offset="0.070" stop-color="#716b68"/><stop offset="0.178" stop-color="#5e5956"/><stop offset="0.286" stop-color="#4e4947"/><stop offset="0.449" stop-color="#3c3735"/><stop offset="0.611" stop-color="#3c3735"/><stop offset="0.827" stop-color="#3c3735"/><stop offset="1.000" stop-color="#3c3735"/></linearGradient><line x1="708" y1="319.6" x2="900.3" y2="532" stroke="url(#lg66)" stroke-width="1.48"/><linearGradient id="lg67" gradientUnits="userSpaceOnUse" x1="0" y1="347" x2="0" y2="532"><stop offset="0.000" stop-color="#746e6c"/><stop offset="0.070" stop-color="#645e5c"/><stop offset="0.178" stop-color="#4e4846"/><stop offset="0.286" stop-color="#3c3735"/><stop offset="0.449" stop-color="#3c3735"/><stop offset="0.611" stop-color="#3c3735"/><stop offset="0.827" stop-color="#3c3735"/><stop offset="1.000" stop-color="#3c3735"/></linearGradient><line x1="708" y1="319.6" x2="687.3" y2="532" stroke="url(#lg67)" stroke-width="1.99"/><linearGradient id="lg68" gradientUnits="userSpaceOnUse" x1="0" y1="347" x2="0" y2="532"><stop offset="0.000" stop-color="#827b79"/><stop offset="0.070" stop-color="#746f6c"/><stop offset="0.178" stop-color="#635d5b"/><stop offset="0.286" stop-color="#544f4c"/><stop offset="0.449" stop-color="#403b39"/><stop offset="0.611" stop-color="#3c3735"/><stop offset="0.827" stop-color="#3c3735"/><stop offset="1.000" stop-color="#3c3735"/></linearGradient><line x1="708" y1="319.6" x2="474.3" y2="532" stroke="url(#lg68)" stroke-width="1.35"/><linearGradient id="lg69" gradientUnits="userSpaceOnUse" x1="0" y1="347" x2="0" y2="532"><stop offset="0.000" stop-color="#8e8784"/><stop offset="0.070" stop-color="#837d7b"/><stop offset="0.178" stop-color="#76706e"/><stop offset="0.286" stop-color="#6b6562"/><stop offset="0.449" stop-color="#5b5653"/><stop offset="0.611" stop-color="#4d4846"/><stop offset="0.827" stop-color="#3d3836"/><stop offset="1.000" stop-color="#3c3735"/></linearGradient><line x1="708" y1="319.6" x2="261.3" y2="532" stroke="url(#lg69)" stroke-width="1.00"/><linearGradient id="lg70" gradientUnits="userSpaceOnUse" x1="0" y1="347" x2="0" y2="532"><stop offset="0.000" stop-color="#958e8b"/><stop offset="0.070" stop-color="#8c8683"/><stop offset="0.178" stop-color="#827b79"/><stop offset="0.286" stop-color="#787270"/><stop offset="0.449" stop-color="#6c6663"/><stop offset="0.611" stop-color="#605b58"/><stop offset="0.827" stop-color="#534d4b"/><stop offset="1.000" stop-color="#494341"/></linearGradient><line x1="708" y1="319.6" x2="48.3" y2="532" stroke="url(#lg70)" stroke-width="1.00"/><linearGradient id="lg71" gradientUnits="userSpaceOnUse" x1="0" y1="347" x2="0" y2="532"><stop offset="0.000" stop-color="#999390"/><stop offset="0.070" stop-color="#928c89"/><stop offset="0.178" stop-color="#898380"/><stop offset="0.286" stop-color="#817b78"/><stop offset="0.449" stop-color="#76706e"/><stop offset="0.611" stop-color="#6c6764"/><stop offset="0.827" stop-color="#615b59"/><stop offset="1.000" stop-color="#585350"/></linearGradient><line x1="708" y1="319.6" x2="-164.7" y2="532" stroke="url(#lg71)" stroke-width="1.00"/><linearGradient id="lg72" gradientUnits="userSpaceOnUse" x1="0" y1="347" x2="0" y2="532"><stop offset="0.000" stop-color="#9c9693"/><stop offset="0.070" stop-color="#96908d"/><stop offset="0.178" stop-color="#8e8885"/><stop offset="0.286" stop-color="#87807e"/><stop offset="0.449" stop-color="#7d7775"/><stop offset="0.611" stop-color="#756f6c"/><stop offset="0.827" stop-color="#6a6562"/><stop offset="1.000" stop-color="#635d5b"/></linearGradient><line x1="708" y1="319.6" x2="-377.7" y2="532" stroke="url(#lg72)" stroke-width="1.00"/><linearGradient id="lg73" gradientUnits="userSpaceOnUse" x1="0" y1="347" x2="0" y2="532"><stop offset="0.000" stop-color="#9f9895"/><stop offset="0.070" stop-color="#999290"/><stop offset="0.178" stop-color="#928b88"/><stop offset="0.286" stop-color="#8b8582"/><stop offset="0.449" stop-color="#837c7a"/><stop offset="0.611" stop-color="#7b7572"/><stop offset="0.827" stop-color="#726c69"/><stop offset="1.000" stop-color="#6b6563"/></linearGradient><line x1="708" y1="319.6" x2="-590.7" y2="532" stroke="url(#lg73)" stroke-width="1.00"/><linearGradient id="lg74" gradientUnits="userSpaceOnUse" x1="0" y1="347" x2="0" y2="532"><stop offset="0.000" stop-color="#a09a97"/><stop offset="0.070" stop-color="#9b9592"/><stop offset="0.178" stop-color="#958e8b"/><stop offset="0.286" stop-color="#8f8886"/><stop offset="0.449" stop-color="#87817e"/><stop offset="0.611" stop-color="#807a77"/><stop offset="0.827" stop-color="#77716f"/><stop offset="1.000" stop-color="#716b69"/></linearGradient><line x1="708" y1="319.6" x2="-803.7" y2="532" stroke="url(#lg74)" stroke-width="1.00"/><linearGradient id="lg75" gradientUnits="userSpaceOnUse" x1="0" y1="347" x2="0" y2="532"><stop offset="0.000" stop-color="#a29b98"/><stop offset="0.070" stop-color="#9d9794"/><stop offset="0.178" stop-color="#97908e"/><stop offset="0.286" stop-color="#918b88"/><stop offset="0.449" stop-color="#8a8481"/><stop offset="0.611" stop-color="#847e7b"/><stop offset="0.827" stop-color="#7c7673"/><stop offset="1.000" stop-color="#76706e"/></linearGradient><line x1="708" y1="319.6" x2="-1016.7" y2="532" stroke="url(#lg75)" stroke-width="1.00"/><rect x="4" y="347" width="820" height="6" fill="#9d9693" opacity="0.35"/></g><path d="M524 318.6 H621.4 V360.6 L524 364.8 Z" fill="#928b88"/><path d="M524 318.6 H621.4 V360.6 L524 364.8 Z" fill="url(#lgrid)"/><linearGradient id="lwg" x1="0" y1="0" x2="1" y2="0"><stop offset="0" stop-color="#000" stop-opacity="0.02"/><stop offset="0.7" stop-color="#000" stop-opacity="0.05"/><stop offset="0.78" stop-color="#000" stop-opacity="0.12"/><stop offset="1" stop-color="#000" stop-opacity="0.16"/></linearGradient><path d="M524 318.6 H621.4 V360.6 L524 364.8 Z" fill="url(#lwg)"/><path d="M524 340 H621.4 V360.6 L524 364.8 Z" fill="url(#wao)"/><line x1="556" y1="318.6" x2="556" y2="363" stroke="#857d7a" stroke-width="0.8"/><line x1="588" y1="318.6" x2="588" y2="363" stroke="#857d7a" stroke-width="0.8"/><line x1="621" y1="318.6" x2="621" y2="363" stroke="#857d7a" stroke-width="0.8"/><rect x="524" y="358" width="3" height="17" fill="#4a4542"/><linearGradient id="aog" x1="0" y1="0" x2="0" y2="1"><stop offset="0" stop-color="#000" stop-opacity="0.13"/><stop offset="1" stop-color="#000" stop-opacity="0"/></linearGradient><path d="M4 386.0 L520 339.6 L520 380.6 L4 427.0 Z" fill="url(#aog)"/><path d="M4 110.0 L520 259.3 L520 340.6 L4 387.0 Z" fill="#3b3938"/><line x1="10.57" y1="111.9" x2="10.57" y2="386.4" stroke="#353332" stroke-width="0.8"/><line x1="23.98" y1="115.8" x2="23.98" y2="385.2" stroke="#353332" stroke-width="0.8"/><line x1="36.89" y1="119.5" x2="36.89" y2="384.0" stroke="#353332" stroke-width="0.8"/><line x1="49.32" y1="123.1" x2="49.32" y2="382.9" stroke="#353332" stroke-width="0.8"/><line x1="61.30" y1="126.6" x2="61.30" y2="381.8" stroke="#242221" stroke-width="1.3"/><line x1="72.85" y1="129.9" x2="72.85" y2="380.8" stroke="#353332" stroke-width="0.8"/><line x1="84.00" y1="133.1" x2="84.00" y2="379.8" stroke="#353332" stroke-width="0.8"/><line x1="94.76" y1="136.3" x2="94.76" y2="378.8" stroke="#353332" stroke-width="0.8"/><line x1="105.15" y1="139.3" x2="105.15" y2="377.9" stroke="#353332" stroke-width="0.8"/><line x1="115.20" y1="142.2" x2="115.20" y2="377.0" stroke="#242221" stroke-width="1.3"/><line x1="124.92" y1="145.0" x2="124.92" y2="376.1" stroke="#353332" stroke-width="0.8"/><line x1="134.33" y1="147.7" x2="134.33" y2="375.3" stroke="#353332" stroke-width="0.8"/><line x1="143.43" y1="150.3" x2="143.43" y2="374.5" stroke="#353332" stroke-width="0.8"/><line x1="152.26" y1="152.9" x2="152.26" y2="373.7" stroke="#353332" stroke-width="0.8"/><line x1="160.81" y1="155.4" x2="160.81" y2="372.9" stroke="#242221" stroke-width="1.3"/><line x1="169.10" y1="157.8" x2="169.10" y2="372.1" stroke="#353332" stroke-width="0.8"/><line x1="177.14" y1="160.1" x2="177.14" y2="371.4" stroke="#353332" stroke-width="0.8"/><line x1="184.95" y1="162.3" x2="184.95" y2="370.7" stroke="#353332" stroke-width="0.8"/><line x1="192.53" y1="164.5" x2="192.53" y2="370.0" stroke="#353332" stroke-width="0.8"/><line x1="199.90" y1="166.7" x2="199.90" y2="369.4" stroke="#242221" stroke-width="1.3"/><line x1="207.06" y1="168.7" x2="207.06" y2="368.7" stroke="#353332" stroke-width="0.8"/><line x1="214.01" y1="170.8" x2="214.01" y2="368.1" stroke="#353332" stroke-width="0.8"/><line x1="220.78" y1="172.7" x2="220.78" y2="367.5" stroke="#353332" stroke-width="0.8"/><line x1="227.37" y1="174.6" x2="227.37" y2="366.9" stroke="#353332" stroke-width="0.8"/><line x1="233.78" y1="176.5" x2="233.78" y2="366.3" stroke="#242221" stroke-width="1.3"/><line x1="240.02" y1="178.3" x2="240.02" y2="365.8" stroke="#353332" stroke-width="0.8"/><line x1="246.10" y1="180.0" x2="246.10" y2="365.2" stroke="#353332" stroke-width="0.8"/><line x1="252.02" y1="181.7" x2="252.02" y2="364.7" stroke="#353332" stroke-width="0.8"/><line x1="257.79" y1="183.4" x2="257.79" y2="364.2" stroke="#353332" stroke-width="0.8"/><line x1="263.42" y1="185.0" x2="263.42" y2="363.7" stroke="#242221" stroke-width="1.3"/><line x1="268.91" y1="186.6" x2="268.91" y2="363.2" stroke="#353332" stroke-width="0.8"/><line x1="274.26" y1="188.2" x2="274.26" y2="362.7" stroke="#353332" stroke-width="0.8"/><line x1="279.49" y1="189.7" x2="279.49" y2="362.2" stroke="#353332" stroke-width="0.8"/><line x1="284.59" y1="191.2" x2="284.59" y2="361.7" stroke="#353332" stroke-width="0.8"/><line x1="289.57" y1="192.6" x2="289.57" y2="361.3" stroke="#242221" stroke-width="1.3"/><line x1="294.44" y1="194.0" x2="294.44" y2="360.9" stroke="#353332" stroke-width="0.8"/><line x1="299.19" y1="195.4" x2="299.19" y2="360.4" stroke="#353332" stroke-width="0.8"/><line x1="303.84" y1="196.7" x2="303.84" y2="360.0" stroke="#353332" stroke-width="0.8"/><line x1="308.38" y1="198.1" x2="308.38" y2="359.6" stroke="#353332" stroke-width="0.8"/><line x1="312.82" y1="199.3" x2="312.82" y2="359.2" stroke="#242221" stroke-width="1.3"/><line x1="317.17" y1="200.6" x2="317.17" y2="358.8" stroke="#353332" stroke-width="0.8"/><line x1="321.41" y1="201.8" x2="321.41" y2="358.4" stroke="#353332" stroke-width="0.8"/><line x1="325.57" y1="203.0" x2="325.57" y2="358.1" stroke="#353332" stroke-width="0.8"/><line x1="329.64" y1="204.2" x2="329.64" y2="357.7" stroke="#353332" stroke-width="0.8"/><line x1="4" y1="109.4" x2="520" y2="263.5" stroke="#242221" stroke-width="1.3"/><line x1="4" y1="123.4" x2="520" y2="267.2" stroke="#353332" stroke-width="0.8"/><line x1="4" y1="137.3" x2="520" y2="270.9" stroke="#353332" stroke-width="0.8"/><line x1="4" y1="151.3" x2="520" y2="274.7" stroke="#353332" stroke-width="0.8"/><line x1="4" y1="165.2" x2="520" y2="278.4" stroke="#353332" stroke-width="0.8"/><line x1="4" y1="179.2" x2="520" y2="282.1" stroke="#242221" stroke-width="1.3"/><line x1="4" y1="193.2" x2="520" y2="285.8" stroke="#353332" stroke-width="0.8"/><line x1="4" y1="207.1" x2="520" y2="289.6" stroke="#353332" stroke-width="0.8"/><line x1="4" y1="221.1" x2="520" y2="293.3" stroke="#353332" stroke-width="0.8"/><line x1="4" y1="235.0" x2="520" y2="297.0" stroke="#353332" stroke-width="0.8"/><line x1="4" y1="249.0" x2="520" y2="300.7" stroke="#242221" stroke-width="1.3"/><line x1="4" y1="263.0" x2="520" y2="304.5" stroke="#353332" stroke-width="0.8"/><line x1="4" y1="276.9" x2="520" y2="308.2" stroke="#353332" stroke-width="0.8"/><line x1="4" y1="290.9" x2="520" y2="311.9" stroke="#353332" stroke-width="0.8"/><line x1="4" y1="304.8" x2="520" y2="315.7" stroke="#353332" stroke-width="0.8"/><line x1="4" y1="318.8" x2="520" y2="319.4" stroke="#242221" stroke-width="1.3"/><line x1="4" y1="332.8" x2="520" y2="323.1" stroke="#353332" stroke-width="0.8"/><line x1="4" y1="346.7" x2="520" y2="326.8" stroke="#353332" stroke-width="0.8"/><line x1="4" y1="360.7" x2="520" y2="330.6" stroke="#353332" stroke-width="0.8"/><line x1="4" y1="374.6" x2="520" y2="334.3" stroke="#353332" stroke-width="0.8"/><path d="M4 373.0 L144 362.4 L144 374.4 L4 387.0 Z" fill="#2e2c2b" opacity="0.5"/><path d="M4 104 H12 L4 112 Z" fill="#1f7ce8"/><linearGradient id="bl" gradientUnits="userSpaceOnUse" x1="4" y1="0" x2="824" y2="0"><stop offset="0" stop-color="#2272dc" stop-opacity="0"/><stop offset="0.05" stop-color="#2272dc" stop-opacity="0.1"/><stop offset="0.17" stop-color="#2272dc" stop-opacity="0.45"/><stop offset="0.63" stop-color="#2272dc" stop-opacity="1"/></linearGradient><rect x="4" y="103.6" width="820" height="1.3" fill="url(#bl)"/><g>
<path d="M670 283.5 L721.5 302.5 Q724 305 721.5 307.5 L670 324.5 Z" fill="#e8e8e8" stroke="#2b2b2b" stroke-width="2.2" stroke-linejoin="round"/>
<rect x="658.5" y="281" width="11" height="103" rx="5.5" fill="url(#poleg)" stroke="#2b2b2b" stroke-width="2"/>
<path d="M709 326 A6 5 0 0 1 717 327" fill="none" stroke="#5a9be0" stroke-width="2.5"/><path d="M692 326 C695 324 700 324 706 326 C712 328 716 328.5 722 328 C728 327.5 733 324 740 324 C745 324 748 325 750 328 C755 336 760 352 761.5 366 C762 375 757 379 751 378 C745 377 740 370 734 367 C728 364 712 363 705 366 C698 369 692 377 685 378.5 C679 379.5 676.5 374 677.5 366 C679 352 684 336 692 326 Z" fill="url(#padg)" stroke="#2b2b2b" stroke-width="2.3"/>
<rect x="692.8" y="344.8" width="20" height="4.4" fill="#e2e2e2"/>
<rect x="700.6" y="337" width="4.4" height="20" fill="#e2e2e2"/>
<circle cx="737.8" cy="347.8" r="10.5" fill="#7a7a7a"/>
<circle cx="737.8" cy="342.6" r="2.9" fill="#f0f0f0"/><circle cx="737.8" cy="353" r="2.9" fill="#f0f0f0"/>
<circle cx="732.6" cy="347.8" r="2.9" fill="#f0f0f0"/><circle cx="743" cy="347.8" r="2.9" fill="#f0f0f0"/>
</g><line x1="33.5" y1="477" x2="33.5" y2="502" stroke="#0a0aff" stroke-width="1.2"/>
<line x1="33.8" y1="501.3" x2="59" y2="501.3" stroke="#22dd22" stroke-width="1.4"/></g></svg>
<div class="t" style="left:36.00px;top:470.34px;font-size:12px;color:#2a2ae8;font-weight:bold;">Z</div>
<div class="t" style="left:61.00px;top:495.84px;font-size:12px;color:#10e010;font-weight:bold;">Y</div>
<div class="t" style="left:36.50px;top:494.52px;font-size:11.5px;color:#f01818;font-weight:bold;">X</div>
<div style="position:absolute;left:10px;top:108px;width:23px;height:30px;background:;background:rgba(66,66,69,0.86);border:1px solid #1e1e1e;box-sizing:border-box;border-radius:12px"></div>
<div style="position:absolute;left:16px;top:118px;width:11px;height:1.1px;background:#cfcfcf;"></div>
<div style="position:absolute;left:16px;top:122.7px;width:11px;height:1.1px;background:#cfcfcf;"></div>
<div style="position:absolute;left:16px;top:127.5px;width:11px;height:1.1px;background:#cfcfcf;"></div>
<div style="position:absolute;left:41px;top:108px;width:103px;height:30px;background:;background:rgba(66,66,69,0.86);border:1px solid #1e1e1e;box-sizing:border-box;border-radius:12px"></div>
<svg style="position:absolute;left:48px;top:114px;" width="18" height="18" viewBox="0 0 18 18"><path d="M8.5 1 L16 5 L8.5 9 L1 5 Z" fill="#d8d8d8"/><path d="M1 5.5 L8 9.5 V17 L1 13 Z" fill="#b4b4b4"/><path d="M16 5.5 L9 9.5 V17 L16 13 Z" fill="#929292"/></svg>
<div class="t" style="left:69.50px;top:115.70px;font-size:13px;color:#c8c8c8;font-weight:normal;">Perspective</div>
<div class="t" style="left:514.00px;top:107.58px;font-size:12.75px;color:#00f000;font-weight:normal;">Transform</div>
<div style="position:absolute;left:572px;top:108px;width:100px;height:30px;background:;background:rgba(66,66,69,0.86);border:1px solid #1e1e1e;box-sizing:border-box;border-radius:12px;overflow:hidden"></div>
<div style="position:absolute;left:598px;top:109px;width:24px;height:28px;background:#0f6ddc;"></div>
<div style="position:absolute;left:622px;top:109px;width:1px;height:28px;background:#2a2a2a;"></div>
<div style="position:absolute;left:647px;top:109px;width:1px;height:28px;background:#2a2a2a;"></div>
<svg style="position:absolute;left:0px;top:0px;" width="1" height="1" viewBox="0 0 1 1"><path d="M583.3 116.5 L592 124.3 L588.6 124.8 L590.8 128.6 L589 129.4 L586.9 125.7 L583.3 128.3 Z" fill="#c4c4c4"/></svg>
<svg style="position:absolute;left:0px;top:0px;" width="1" height="1" viewBox="0 0 1 1"><path d="M610.5 118.5 V128.2 M605.6 123.3 H615.4" stroke="#fff" stroke-width="1.5"/><path d="M610.5 116.8 L607.8 119.6 H613.2 Z M610.5 129.8 L607.8 127 H613.2 Z M604 123.3 L606.8 120.6 V126 Z M617 123.3 L614.2 120.6 V126 Z" fill="#fff"/></svg>
<svg style="position:absolute;left:0px;top:0px;" width="1" height="1" viewBox="0 0 1 1"><path d="M630.2 121.5 A5.6 5.6 0 0 1 640.2 120.2" fill="none" stroke="#c4c4c4" stroke-width="1.5"/><path d="M641 124.8 A5.6 5.6 0 0 1 631 126.3" fill="none" stroke="#c4c4c4" stroke-width="1.5"/><path d="M642.2 117.5 L642.2 122.5 L637.5 121.5 Z M629 129 L629 124 L633.7 125 Z" fill="#c4c4c4"/></svg>
<svg style="position:absolute;left:0px;top:0px;" width="1" height="1" viewBox="0 0 1 1"><path d="M657.2 118.2 H653.4 V122 M653.4 124.5 V128.3 H657.2 M660 128.3 H663.8 V124.5" fill="none" stroke="#c4c4c4" stroke-width="1.4"/><path d="M656.5 125.5 L662 120" stroke="#c4c4c4" stroke-width="1.6"/><path d="M664.3 117.5 V123 L658.8 117.5 Z" fill="#c4c4c4"/><rect x="653.4" y="125.3" width="3" height="3" fill="#c4c4c4"/></svg>
<div style="position:absolute;left:678px;top:108px;width:24px;height:30px;background:;background:rgba(66,66,69,0.86);border:1px solid #1e1e1e;box-sizing:border-box;border-radius:12px"></div>
<svg style="position:absolute;left:681px;top:114px;" width="18" height="18" viewBox="0 0 18 18"><circle cx="9" cy="9" r="6.5" fill="none" stroke="#c8c8c8" stroke-width="1.3"/><ellipse cx="9" cy="9" rx="2.8" ry="6.5" fill="none" stroke="#c8c8c8" stroke-width="1.2"/><path d="M2.5 9 H15.5" stroke="#c8c8c8" stroke-width="1.2"/></svg>
<div class="t" style="left:701.50px;top:107.58px;font-size:12.75px;color:#00f000;font-weight:normal;">LocationGridSnap</div>
<div style="position:absolute;left:803px;top:108px;width:30px;height:30px;background:;background:rgba(66,66,69,0.86);border:1px solid #1e1e1e;box-sizing:border-box;border-radius:12px"></div>
<svg style="position:absolute;left:806px;top:114px;" width="18" height="18" viewBox="0 0 18 18"><path d="M3 3.5 L6.5 12 L15.5 14 M6.5 12 L13 5" fill="none" stroke="#d0d0d0" stroke-width="1.2"/><path d="M1.8 1.5 L5.5 3.5 L2 5.5 Z M15 3.5 L14.5 7.5 L11.5 5 Z M17 14.5 L13.5 16.5 L13.8 12.5 Z" fill="#d0d0d0"/><circle cx="6.5" cy="12" r="1.4" fill="#d0d0d0"/></svg>
<svg style="position:absolute;left:8px;top:539px;" width="20" height="18" viewBox="0 0 20 18"><path d="M0.5 1 H6.5 L8 3 H0.5 Z" fill="#8a8a8a"/><path d="M0.5 3.5 H16 V7 A5.2 5.2 0 0 0 9.5 15.5 H0.5 Z" fill="#c8c8c8"/><circle cx="12.8" cy="10.5" r="3.6" fill="none" stroke="#c8c8c8" stroke-width="1.4"/><path d="M10.2 13.3 L7.2 16.8" stroke="#c8c8c8" stroke-width="1.6" stroke-linecap="round"/></svg>
<div class="t" style="left:30.50px;top:540.70px;font-size:13px;color:#d0d0d0;font-weight:normal;">Content Browser</div>
<div style="position:absolute;left:4px;top:562px;width:820px;height:201px;background:#242424;"></div>
<div style="position:absolute;left:7.5px;top:569.5px;width:480px;height:20.5px;background:#0f0f0f;border-radius:10px;box-sizing:border-box;border:1px solid #383838"></div>
<svg style="position:absolute;left:11px;top:571px;" width="18" height="18" viewBox="0 0 18 18"><circle cx="7.5" cy="7.5" r="5.2" fill="none" stroke="#cfcfcf" stroke-width="1.5"/><path d="M11.3 11.3 L15.5 15.5" stroke="#cfcfcf" stroke-width="1.6" stroke-linecap="round"/></svg>
<div class="t" style="left:34.50px;top:572.00px;font-size:13px;color:#5f5f5f;font-weight:normal;">Search Log</div>
<div class="t" style="left:512.00px;top:571.50px;font-size:13px;color:#cfcfcf;font-weight:normal;">Filters</div>
<svg style="position:absolute;left:554px;top:576px;" width="10" height="7" viewBox="0 0 10 7"><path d="M1 1 L4.5 4.5 L8 1" fill="none" stroke="#cfcfcf" stroke-width="1.6"/></svg>
<div style="position:absolute;left:7.5px;top:595.5px;width:817px;height:170px;background:#1a1a1a;border-radius:4px 0 0 0"></div>
<div class="m" style="left:16px;top:598.5px">LogPakFile: Display: Mounted Pak file '../../../../../Templates/TP_Virtuks/TP_VirtualRealityBP.upack', mount point: '../../../../../Templates/
LogSlate: Took 0.000123 seconds to synchronously load lazily loaded font '../../../Engine/Content/Slate/Fonts/DroidSansFallback.ttf' (3848K)
LogSlate: Took 0.000098 seconds to synchronously load lazily loaded font '../../../Engine/Content/Slate/Fonts/Roboto-Regular.ttf' (168K)
LogSlate: Took 0.000142 seconds to synchronously load lazily loaded font '../../../Engine/Content/Slate/Fonts/DroidSansMono.ttf' (77K)
LogSlate: The tab 'LevelEditorToolBox' attempted to spawn in layout 'Levditor_Layout_v1.8' but failed for some reason. It will not be displayed.
LogSlate: The tab "LevelEditorSelectionDetails2" ToolBo                 x_ActiveTab" attempted to spawn in layout 'LevelEditor_Layout'
LogSlate: The tab "LevelEditorToolBox" LevelEdi                         itorToolBox_ActiveTab" attempted to spawn in layout 'LevelEditor'
LogSlate: The tab "LevelEditorSelectionDetails3" ToolBo                 x_ActiveTab" attempted to spawn in layout 'LevelEditor_Layout'
LogTurnkeySupport: Completed device detection: Code=0, Device=DESKTOP-R RPQP408, Type=Computer, Status=Valid, MinAllowed=10.0.19041.0
LogSlate: Took 0.000087 seconds to synchronously load lazily loaded font '../../../Engine/Content/Slate/Fonts/Roboto-Bold.ttf' (160K)
LogViewport: Scene viewport resized
LogAssetRegistry: LoadingCache: Asset registry cache written as 1.3 MiB ./../../../../1 Project/example-ue5/Intermediate/CachedAssetRegistry.bin</div>
<div style="position:absolute;left:144px;top:38px;width:381px;height:723px;background:#383838;box-sizing:border-box;border:1px solid #474747;border-top:none"></div>
<div class="t" style="left:144.00px;top:49.98px;font-size:12.75px;color:#00f000;font-weight:normal;">LevelEditor</div>
<div class="t" style="left:219.50px;top:49.73px;font-size:10px;color:#737373;font-weight:bold;letter-spacing:0.75px;transform:scaleX(0.86);transform-origin:0 0">LEVEL EDITOR</div>
<div style="position:absolute;left:304px;top:57px;width:209px;height:1px;background:#5f5f5f;"></div>
<div class="t" style="left:214.00px;top:73.88px;font-size:12.75px;color:#e6e6e6;font-weight:normal;">Cinematics</div>
<svg style="position:absolute;left:191px;top:74.5px;" width="15" height="15" viewBox="0 0 15 15"><path d="M0.8 5.5 L13 1" stroke="#bdbdbd" stroke-width="1.6" stroke-dasharray="1.8 1.2"/><rect x="1.4" y="6.3" width="12.2" height="6.8" fill="#7a7a7a" stroke="#bdbdbd" stroke-width="1"/></svg>
<svg style="position:absolute;left:508px;top:75px;" width="9" height="12" viewBox="0 0 9 12"><path d="M1.5 1.50 L6.5 6.00 L1.5 10.50" fill="none" stroke="#c8c8c8" stroke-width="1.9"/></svg>
<div class="t" style="left:214.00px;top:97.88px;font-size:12.75px;color:#e6e6e6;font-weight:normal;">Content Browser</div>
<svg style="position:absolute;left:191px;top:97.5px;" width="15" height="15" viewBox="0 0 15 15"><path d="M0.5 0.5 H5.5 L7 2.5 H0.5 Z" fill="#7a7a7a"/><path d="M0.5 2.5 H12.5 V6 A4.2 4.2 0 0 0 6.8 12.5 H0.5 Z" fill="#bdbdbd"/><circle cx="10.5" cy="8.8" r="3" fill="none" stroke="#bdbdbd" stroke-width="1.2"/><path d="M8.3 11.2 L5.5 14" stroke="#bdbdbd" stroke-width="1.3" stroke-linecap="round"/></svg>
<svg style="position:absolute;left:508px;top:99px;" width="9" height="12" viewBox="0 0 9 12"><path d="M1.5 1.50 L6.5 6.00 L1.5 10.50" fill="none" stroke="#c8c8c8" stroke-width="1.9"/></svg>
<div class="t" style="left:214.00px;top:121.88px;font-size:12.75px;color:#e6e6e6;font-weight:normal;">Details</div>
<svg style="position:absolute;left:191px;top:122.5px;" width="15" height="15" viewBox="0 0 15 15"><path d="M0.5 12.3 L1.4 8.7 L9.3 0.8 L12 3.5 L4.1 11.4 Z" fill="#bdbdbd"/><path d="M1 1 H7 M1 3.9 H4 M11.2 7 H13.2 M8.2 9.7 H13.2 M5.2 12.4 H13.2" stroke="#8a8a8a" stroke-width="1"/></svg>
<svg style="position:absolute;left:508px;top:123px;" width="9" height="12" viewBox="0 0 9 12"><path d="M1.5 1.50 L6.5 6.00 L1.5 10.50" fill="none" stroke="#c8c8c8" stroke-width="1.9"/></svg>
<div class="t" style="left:214.00px;top:145.88px;font-size:12.75px;color:#e6e6e6;font-weight:normal;">ImgMedia</div>
<svg style="position:absolute;left:191px;top:146px;" width="15" height="15" viewBox="0 0 15 15"><circle cx="6.3" cy="6.5" r="6.2" fill="#bdbdbd"/><circle cx="6.3" cy="3" r="1.6" fill="#3a3a3a"/><circle cx="6.3" cy="10" r="1.6" fill="#3a3a3a"/><circle cx="2.8" cy="6.5" r="1.6" fill="#3a3a3a"/><circle cx="9.8" cy="6.5" r="1.6" fill="#3a3a3a"/><path d="M6.5 12.8 H13" stroke="#7a7a7a" stroke-width="0.8"/></svg>
<svg style="position:absolute;left:508px;top:147px;" width="9" height="12" viewBox="0 0 9 12"><path d="M1.5 1.50 L6.5 6.00 L1.5 10.50" fill="none" stroke="#c8c8c8" stroke-width="1.9"/></svg>
<div class="t" style="left:214.00px;top:169.88px;font-size:12.75px;color:#e6e6e6;font-weight:normal;">Outliner</div>
<svg style="position:absolute;left:191.5px;top:170.5px;" width="15" height="15" viewBox="0 0 15 15"><rect x="0.3" y="0" width="12.5" height="2.3" fill="#bdbdbd"/><rect x="4.5" y="5.3" width="8.3" height="2.4" fill="#bdbdbd"/><rect x="4.5" y="9.5" width="8.3" height="2.5" fill="#bdbdbd"/><path d="M1 2.3 V11 M1 6.5 H4 M1 10.8 H4" stroke="#7a7a7a" stroke-width="0.9"/></svg>
<svg style="position:absolute;left:508px;top:171px;" width="9" height="12" viewBox="0 0 9 12"><path d="M1.5 1.50 L6.5 6.00 L1.5 10.50" fill="none" stroke="#c8c8c8" stroke-width="1.9"/></svg>
<div class="t" style="left:214.00px;top:193.88px;font-size:12.75px;color:#e6e6e6;font-weight:normal;">Viewports</div>
<svg style="position:absolute;left:191px;top:196px;" width="15" height="15" viewBox="0 0 15 15"><rect x="0" y="0" width="6" height="4.5" fill="#8c8c8c"/><rect x="7" y="0" width="6" height="4.5" fill="#c4c4c4"/><rect x="0" y="5.5" width="6" height="4.5" fill="#8c8c8c"/><rect x="7" y="5.5" width="6" height="4.5" fill="#8c8c8c"/></svg>
<svg style="position:absolute;left:508px;top:195px;" width="9" height="12" viewBox="0 0 9 12"><path d="M1.5 1.50 L6.5 6.00 L1.5 10.50" fill="none" stroke="#c8c8c8" stroke-width="1.9"/></svg>
<div class="t" style="left:214.00px;top:217.88px;font-size:12.75px;color:#e6e6e6;font-weight:normal;">World Partition</div>
<svg style="position:absolute;left:191.5px;top:219px;" width="15" height="15" viewBox="0 0 15 15"><rect x="0.5" y="0" width="11" height="11.5" fill="#b0b0b0"/><path d="M6 0 V11.5 M0.5 5.5 H11.5 M0.5 8.5 H11.5 M3 5.5 V11.5 M9 5.5 V11.5" stroke="#6a6a6a" stroke-width="0.7"/><rect x="4.2" y="6.8" width="3" height="3" fill="#21539e"/></svg>
<svg style="position:absolute;left:508px;top:219px;" width="9" height="12" viewBox="0 0 9 12"><path d="M1.5 1.50 L6.5 6.00 L1.5 10.50" fill="none" stroke="#c8c8c8" stroke-width="1.9"/></svg>
<div class="t" style="left:214.00px;top:241.88px;font-size:12.75px;color:#e6e6e6;font-weight:normal;">Env. Light Mixer</div>
<svg style="position:absolute;left:191.5px;top:242.8px;" width="15" height="15" viewBox="0 0 15 15"><circle cx="6.5" cy="6.3" r="5.7" fill="none" stroke="#b5b5b5" stroke-width="1.1"/><circle cx="6.3" cy="6.6" r="4" fill="#8e8e8e"/><circle cx="7.6" cy="5.1" r="3.3" fill="#383838"/><circle cx="7.8" cy="4.6" r="1.6" fill="#cfcfcf"/></svg>
<div class="t" style="left:214.00px;top:265.88px;font-size:12.75px;color:#666666;font-weight:normal;">Hierarchical LOD Outliner</div>
<svg style="position:absolute;left:191px;top:266.7px;" width="15" height="15" viewBox="0 0 15 15"><rect x="5" y="0" width="8" height="9.5" fill="#5c5c5c"/><path d="M3.5 3 V11 H11 M1.5 5.5 V12.8 H8.5" fill="none" stroke="#4e4e4e" stroke-width="0.9"/></svg>
<div class="t" style="left:214.00px;top:289.88px;font-size:12.75px;color:#e6e6e6;font-weight:normal;">Layers</div>
<svg style="position:absolute;left:191.5px;top:289.5px;" width="15" height="15" viewBox="0 0 15 15"><path d="M6.8 0 L13.2 3.3 L6.8 6.6 L0.4 3.3 Z" fill="#c0c0c0"/><path d="M0.8 6.2 L6.8 9.3 L12.8 6.2" fill="none" stroke="#9a9a9a" stroke-width="1.3"/><path d="M0.8 9.2 L6.8 12.3 L12.8 9.2" fill="none" stroke="#9a9a9a" stroke-width="1.3"/></svg>
<svg style="position:absolute;left:0px;top:0px;" width="1" height="1" viewBox="0 0 1 1"><path d="M162.6 297.00 L166.7 300.60 L174.2 293.80" fill="none" stroke="#f2f2f2" stroke-width="2.5" stroke-linecap="round" stroke-linejoin="round"/></svg>
<div class="t" style="left:214.00px;top:313.88px;font-size:12.75px;color:#e6e6e6;font-weight:normal;">Levels</div>
<svg style="position:absolute;left:191px;top:314px;" width="15" height="15" viewBox="0 0 15 15"><path d="M3 7 L5.8 0 L8 5 L9.5 3 L11 7 Z" fill="#b0b0b0"/><path d="M0.2 8.5 H13.2 M0.2 10.8 H13.2 M0.2 13 H13.2" stroke="#9a9a9a" stroke-width="1.3"/><path d="M0.2 6 V8.5 M13.2 6 V8.5" stroke="#8a8a8a" stroke-width="0.8"/></svg>
<div class="t" style="left:214.00px;top:337.88px;font-size:12.75px;color:#e6e6e6;font-weight:normal;">Light Mixer</div>
<svg style="position:absolute;left:191.5px;top:338.5px;" width="15" height="15" viewBox="0 0 15 15"><circle cx="6.5" cy="5.8" r="2.3" fill="#a8a8a8"/><path d="M6.5 0 V1.6 M2 1.5 L3.1 2.6 M11 1.5 L9.9 2.6 M0.2 5.8 H2 M11 5.8 H12.8" stroke="#8a8a8a" stroke-width="1"/><path d="M0 10.7 H5 M8 10.7 H13" stroke="#a0a0a0" stroke-width="1.2"/><rect x="4.8" y="9" width="1.6" height="3.5" fill="#b0b0b0"/></svg>
<div class="t" style="left:214.00px;top:361.88px;font-size:12.75px;color:#e6e6e6;font-weight:normal;">Place Actors</div>
<svg style="position:absolute;left:191px;top:361.5px;" width="15" height="15" viewBox="0 0 15 15"><path d="M0.3 2.5 L5.5 0.2 L10.8 2.5 V8 L5.5 12.5 L0.3 10 Z" fill="#a8a8a8"/><path d="M5.5 0.2 L10.8 2.5 V8 L5.5 12.5 Z" fill="#8c8c8c"/><path d="M7.2 9.8 H13.4 M10.3 6.7 V12.9" stroke="#383838" stroke-width="3.2"/><path d="M7.6 9.8 H13 M10.3 7.1 V12.5" stroke="#c4c4c4" stroke-width="1.5"/></svg>
<div class="t" style="left:214.00px;top:385.88px;font-size:12.75px;color:#e6e6e6;font-weight:normal;">Variant Manager</div>
<svg style="position:absolute;left:191px;top:387px;" width="15" height="15" viewBox="0 0 15 15"><path d="M0.5 0 L4.3 1.5 V12.5 L0.5 11 Z" fill="#b0b0b0"/><path d="M5.5 0.5 L9 1.8 V12.2 L5.5 11 Z" fill="none" stroke="#9a9a9a" stroke-width="1"/><path d="M10 0.7 L13.2 2 V12.5 L10 11.2 Z" fill="#8a8a8a"/></svg>
<div class="t" style="left:214.00px;top:409.88px;font-size:12.75px;color:#e6e6e6;font-weight:normal;">World Settings</div>
<svg style="position:absolute;left:191.5px;top:410.6px;" width="15" height="15" viewBox="0 0 15 15"><circle cx="6.3" cy="6.3" r="6.2" fill="#8c8c8c"/><path d="M1.5 3 C3 1 6 0.5 7 2 C6 3.5 4.5 3.5 4.5 5.5 C3 6 2 5 1.5 3 Z" fill="#aaaaaa"/><path d="M4 8.5 C5 7 8 7.5 8.5 9 C8.5 11 7.5 12.5 6 12.5 C4.5 12 4 10 4 8.5 Z" fill="#b5b5b5"/><path d="M8.5 1 C11 2 12.5 4.5 12.3 7 C11 6 9.5 4 8.5 1Z" fill="#9c9c9c"/></svg>
<svg style="position:absolute;left:0px;top:0px;" width="1" height="1" viewBox="0 0 1 1"><path d="M162.6 417.00 L166.7 420.60 L174.2 413.80" fill="none" stroke="#f2f2f2" stroke-width="2.5" stroke-linecap="round" stroke-linejoin="round"/></svg>
<div class="t" style="left:144.00px;top:433.08px;font-size:12.75px;color:#00f000;font-weight:normal;">Log</div>
<div class="t" style="left:176.80px;top:433.04px;font-size:10px;color:#737373;font-weight:bold;letter-spacing:0.75px;transform:scaleX(0.86);transform-origin:0 0">LOG</div>
<div style="position:absolute;left:210px;top:440px;width:303px;height:1px;background:#5f5f5f;"></div>
<div class="t" style="left:214.00px;top:456.88px;font-size:12.75px;color:#e6e6e6;font-weight:normal;">Device Output Log</div>
<svg style="position:absolute;left:193px;top:458.0px;" width="15" height="15" viewBox="0 0 15 15"><rect x="0" y="2" width="10.2" height="11" fill="#bcbcbc"/><rect x="1.3" y="0" width="2.6" height="3.2" fill="#bcbcbc"/><rect x="5.6" y="0" width="2.6" height="3.2" fill="#bcbcbc"/><rect x="2.1" y="1.6" width="1" height="1.3" fill="#4a4a4a"/><rect x="6.4" y="1.6" width="1" height="1.3" fill="#4a4a4a"/><path d="M1.6 5.2 L4.8 7.2 L1.6 9.2" fill="none" stroke="#2a2a2a" stroke-width="1.3"/><path d="M5.2 10 H8.8" stroke="#2a2a2a" stroke-width="1.2"/></svg>
<div class="t" style="left:214.00px;top:480.88px;font-size:12.75px;color:#e6e6e6;font-weight:normal;">Message Log</div>
<svg style="position:absolute;left:193px;top:482.0px;" width="15" height="15" viewBox="0 0 15 15"><rect x="0" y="2" width="10.2" height="11" fill="#bcbcbc"/><rect x="1.3" y="0" width="2.6" height="3.2" fill="#bcbcbc"/><rect x="5.6" y="0" width="2.6" height="3.2" fill="#bcbcbc"/><rect x="2.1" y="1.6" width="1" height="1.3" fill="#4a4a4a"/><rect x="6.4" y="1.6" width="1" height="1.3" fill="#4a4a4a"/><ellipse cx="5.1" cy="7" rx="4" ry="2.9" fill="#2a2a2a"/><path d="M2.6 8.8 L1.4 11.8 L4.6 9.3 Z" fill="#2a2a2a"/></svg>
<div class="t" style="left:214.00px;top:504.88px;font-size:12.75px;color:#e6e6e6;font-weight:normal;">Output Log</div>
<svg style="position:absolute;left:193px;top:505.99999999999994px;" width="15" height="15" viewBox="0 0 15 15"><rect x="0" y="2" width="10.2" height="11" fill="#bcbcbc"/><rect x="1.3" y="0" width="2.6" height="3.2" fill="#bcbcbc"/><rect x="5.6" y="0" width="2.6" height="3.2" fill="#bcbcbc"/><rect x="2.1" y="1.6" width="1" height="1.3" fill="#4a4a4a"/><rect x="6.4" y="1.6" width="1" height="1.3" fill="#4a4a4a"/><path d="M1.6 5.2 L4.8 7.2 L1.6 9.2" fill="none" stroke="#2a2a2a" stroke-width="1.3"/><path d="M5.2 10 H8.8" stroke="#2a2a2a" stroke-width="1.2"/></svg>
<svg style="position:absolute;left:0px;top:0px;" width="1" height="1" viewBox="0 0 1 1"><path d="M162.6 512.00 L166.7 515.60 L174.2 508.80" fill="none" stroke="#f2f2f2" stroke-width="2.5" stroke-linecap="round" stroke-linejoin="round"/></svg>
<div class="t" style="left:144.00px;top:527.88px;font-size:12.75px;color:#00f000;font-weight:normal;">GetContent</div>
<div class="t" style="left:219.50px;top:528.03px;font-size:10px;color:#737373;font-weight:bold;letter-spacing:0.75px;transform:scaleX(0.86);transform-origin:0 0">GET CONTENT</div>
<div style="position:absolute;left:301px;top:535px;width:212px;height:1px;background:#5f5f5f;"></div>
<div class="t" style="left:144.00px;top:551.88px;font-size:12.75px;color:#00f000;font-weight:normal;">OpenMarketplace</div>
<svg style="position:absolute;left:293.5px;top:552px;" width="15" height="15" viewBox="0 0 15 15"><path d="M4 3.8 A2.7 2.7 0 0 1 9.4 3.8" fill="none" stroke="#b0b0b0" stroke-width="0.9"/><rect x="0" y="3.8" width="13.5" height="9" fill="#b8b8b8"/><path d="M3.5 6.6 C4.5 5.6 5.5 5.4 5.6 6 V10.6 C6.6 10.6 7.5 10 7.5 10 V6 C8.2 5.4 9 5.3 9.5 5.5 L8.8 6.2 V10 C9.3 10 10 9.4 10.3 9 C9.6 10.8 8.5 11.8 7 11.6 C5.5 12 4.3 11.5 4.3 10.5 V6.7 Z" fill="#3a3a3a"/></svg>
<div class="t" style="left:315.50px;top:551.88px;font-size:12.75px;color:#e6e6e6;font-weight:normal;">Open Marketplace</div>
<div class="t" style="left:144.00px;top:575.88px;font-size:12.75px;color:#00f000;font-weight:normal;">OpenBridgeTab</div>
<svg style="position:absolute;left:281px;top:577px;" width="15" height="15" viewBox="0 0 15 15"><path d="M0 0 H9.8 L12.1 1.8 V12 H0 Z" fill="#b8b8b8" /><rect x="3.1" y="2.9" width="6" height="1.6" fill="#383838"/><rect x="3.1" y="7.2" width="6" height="1.6" fill="#383838"/></svg>
<div class="t" style="left:302.50px;top:575.88px;font-size:12.75px;color:#e6e6e6;font-weight:normal;">Quixel Bridge</div>
<div class="t" style="left:144.00px;top:598.88px;font-size:12.75px;color:#00f000;font-weight:normal;">WindowLayout</div>
<div class="t" style="left:240.00px;top:599.03px;font-size:10px;color:#737373;font-weight:bold;letter-spacing:0.75px;transform:scaleX(0.86);transform-origin:0 0">LAYOUT</div>
<div style="position:absolute;left:293px;top:606px;width:220px;height:1px;background:#5f5f5f;"></div>
<div class="t" style="left:144.00px;top:622.88px;font-size:12.75px;color:#00f000;font-weight:normal;">LoadLayout</div>
<svg style="position:absolute;left:258px;top:624.8px;" width="15" height="15" viewBox="0 0 15 15"><path d="M0.5 0.7 H5.6 V12.2 M0.5 0.7 V12.2 H13.9 V7.1 H0.5" fill="none" stroke="#8e8e8e" stroke-width="0.9"/><rect x="6.3" y="8.6" width="6" height="2" fill="#bdbdbd"/><path d="M10.7 -1.8 V2.2" stroke="#bdbdbd" stroke-width="1.5"/><path d="M8 1.5 H13.4 L10.7 4.9 Z" fill="#bdbdbd"/></svg>
<div class="t" style="left:280.80px;top:622.88px;font-size:12.75px;color:#e6e6e6;font-weight:normal;">Load Layout</div>
<svg style="position:absolute;left:508px;top:624px;" width="9" height="12" viewBox="0 0 9 12"><path d="M1.5 1.50 L6.5 6.00 L1.5 10.50" fill="none" stroke="#c8c8c8" stroke-width="1.9"/></svg>
<div class="t" style="left:144.00px;top:646.88px;font-size:12.75px;color:#00f000;font-weight:normal;">OverrideLayout</div>
<svg style="position:absolute;left:280.5px;top:648.8px;" width="15" height="15" viewBox="0 0 15 15"><path d="M0.5 0.7 H5.6 V12.2 M0.5 0.7 V12.2 H13.9 V7.1 H0.5" fill="none" stroke="#8e8e8e" stroke-width="0.9"/><rect x="6.3" y="8.6" width="6" height="2" fill="#bdbdbd"/><path d="M10.7 6 V1.8" stroke="#bdbdbd" stroke-width="1.5"/><path d="M8 2.6 H13.4 L10.7 -0.8 Z" fill="#bdbdbd"/></svg>
<div class="t" style="left:303.00px;top:646.88px;font-size:12.75px;color:#e6e6e6;font-weight:normal;">Save Layout</div>
<svg style="position:absolute;left:508px;top:648px;" width="9" height="12" viewBox="0 0 9 12"><path d="M1.5 1.50 L6.5 6.00 L1.5 10.50" fill="none" stroke="#c8c8c8" stroke-width="1.9"/></svg>
<div class="t" style="left:144.00px;top:670.88px;font-size:12.75px;color:#00f000;font-weight:normal;">RemoveLayout</div>
<svg style="position:absolute;left:277.5px;top:672.8px;" width="15" height="15" viewBox="0 0 15 15"><path d="M0.5 0.7 H5.6 V12.2 M0.5 0.7 V12.2 H13.9 V7.1 H0.5" fill="none" stroke="#8e8e8e" stroke-width="0.9"/><rect x="6.3" y="8.6" width="6" height="2" fill="#bdbdbd"/><path d="M8.6 -1.4 L12.8 2.8 M12.8 -1.4 L8.6 2.8" stroke="#bdbdbd" stroke-width="1.1"/></svg>
<div class="t" style="left:299.70px;top:670.88px;font-size:12.75px;color:#e6e6e6;font-weight:normal;">Remove Layout</div>
<svg style="position:absolute;left:508px;top:672px;" width="9" height="12" viewBox="0 0 9 12"><path d="M1.5 1.50 L6.5 6.00 L1.5 10.50" fill="none" stroke="#c8c8c8" stroke-width="1.9"/></svg>
<div class="t" style="left:144.00px;top:689.88px;font-size:12.75px;color:#00f000;font-weight:normal;">FullscreenSeparator</div>
<div style="position:absolute;left:272.5px;top:696px;width:240.5px;height:1px;background:#5f5f5f;"></div>
<div class="t" style="left:144.00px;top:709.88px;font-size:12.75px;color:#00f000;font-weight:normal;">ToggleFullscreen</div>
<div style="position:absolute;left:257px;top:708px;width:18px;height:18px;background:#262626;box-sizing:border-box;border:1px solid #4e4e4e;border-radius:3px"></div>
<svg style="position:absolute;left:290px;top:711px;" width="15" height="13" viewBox="0 0 15 13"><path d="M0.8 4.5 V0.8 H4.5 M9.5 0.8 H13.2 V4.5 M13.2 8 V11.7 H9.5 M4.5 11.7 H0.8 V8" fill="none" stroke="#c0c0c0" stroke-width="1.5"/></svg>
<div class="t" style="left:312.80px;top:709.88px;font-size:12.75px;color:#e6e6e6;font-weight:normal;">Enable Fullscreen</div>
<div class="t" style="left:461.00px;top:709.66px;font-size:10.5px;color:#a6a6a6;font-weight:normal;">SHIFT+F11</div>
<div class="t" style="left:144.00px;top:733.88px;font-size:12.75px;color:#00f000;font-weight:normal;">PluginAction</div>
<svg style="position:absolute;left:262.5px;top:734px;" width="15" height="14" viewBox="0 0 15 14"><path d="M7.8 0 C3 1.5 -0.5 6.5 0.3 10.5 C0.6 12.5 2 13.8 3.5 13.8 C3 10.5 3.8 6 7.8 0 Z" fill="#2648b0"/><path d="M7.2 1.2 C5.5 3 4.5 4.5 4.3 5.5 L5.5 4.8 C6 3.5 6.8 2.2 7.2 1.2 Z" fill="#2a50b8"/><path d="M4.5 6 C6.5 4.5 9.5 5.5 11 9 L12.8 8.3 L12.6 13.6 L8.3 11 L9.9 10.3 C8.7 8.2 6.7 6.8 4.5 6 Z" fill="#3b9fd9"/></svg>
<div class="t" style="left:284.00px;top:733.88px;font-size:12.75px;color:#e6e6e6;font-weight:normal;">ue.d.ts</div>
</body></html>
